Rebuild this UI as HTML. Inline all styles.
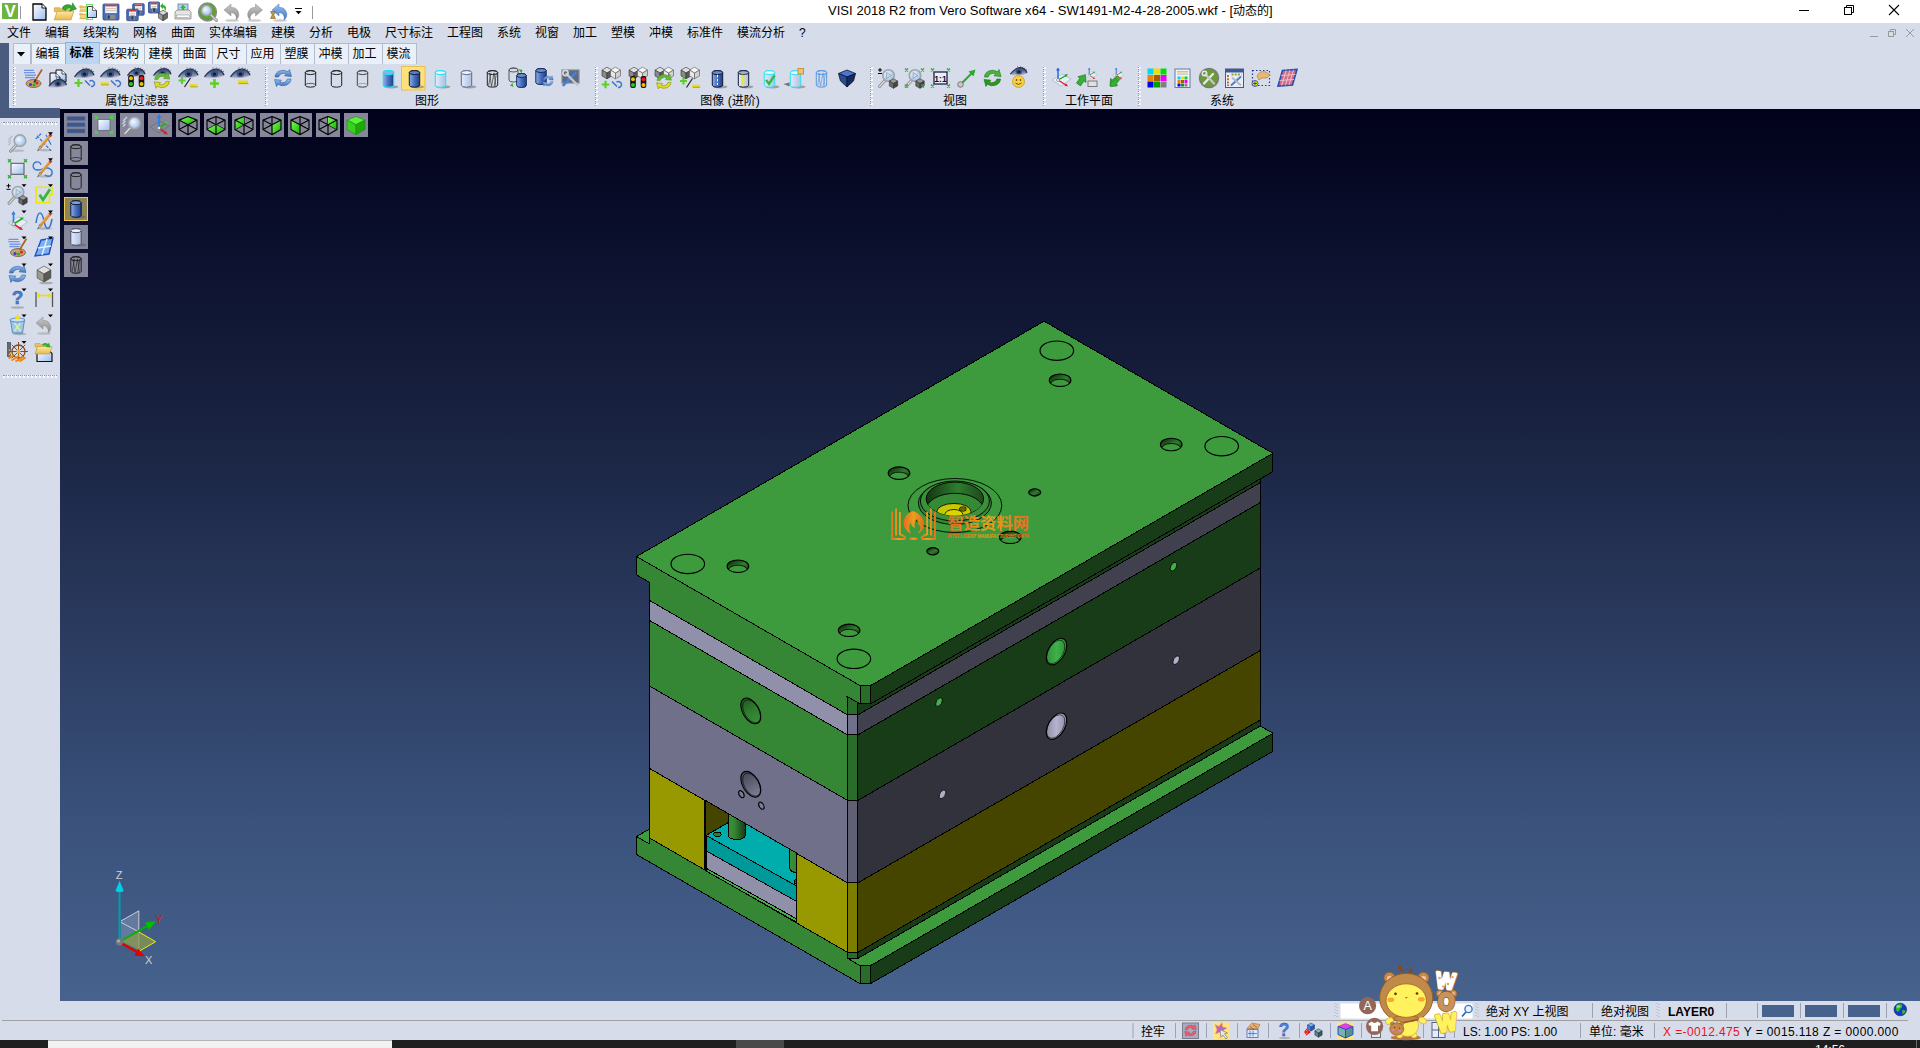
<!DOCTYPE html><html><head><meta charset="utf-8"><title>VISI</title><style>
*{margin:0;padding:0;box-sizing:border-box}
html,body{width:1920px;height:1048px;overflow:hidden;background:#d6dcea;font-family:"Liberation Sans","Noto Sans CJK SC",sans-serif;font-size:12px;color:#000}
.abs{position:absolute}
#title{left:0;top:0;width:1920px;height:23px;background:#fff}
#title .t{left:828px;top:1px;font-size:13px;white-space:nowrap;letter-spacing:0.04px}
#menu{left:0;top:23px;width:1920px;height:20px;background:#d6dcea}
#menu span{position:absolute;top:2px;font-size:12px;white-space:nowrap;line-height:16px}
#strip{left:0;top:43px;width:9px;height:75px;background:#4a5b80}
#strip2{left:0;top:108px;width:60px;height:10px;background:#4a5b80}
#tabs{left:12px;top:43px;height:21px}
.tab{position:absolute;top:43px;height:21px;background:#eaf0fa;border:1px solid #b4bccc;border-bottom:none;font-size:12px;line-height:21px;text-align:center;white-space:nowrap;padding-right:2px}
.tab.sel{background:#bcd6f2;border-color:#8fb0d8;top:42px;height:22px;font-weight:bold}
#tb{left:12px;top:64px;width:1908px;height:45px;background:#d6dcea}
.grp{position:absolute;top:93px;font-size:12px;line-height:16px;white-space:nowrap;transform:translateX(-50%)}
.grip{position:absolute;top:67px;width:3px;height:39px;background-image:repeating-linear-gradient(#f6f8fc 0 2px,transparent 2px 4px);border-left:1px dotted #8e96a8}
#left{left:0;top:118px;width:60px;height:883px;background:#d6dcea}
.hgrip{position:absolute;left:3px;width:54px;height:3px;border-top:1px dotted #8e96a8;background-image:repeating-linear-gradient(90deg,#f6f8fc 0 2px,transparent 2px 4px)}
#vp{left:60px;top:109px;width:1860px;height:892px;background:linear-gradient(#01011a 0%,#0a0f2c 14%,#18213f 34%,#2a3a5e 58%,#3a527c 80%,#46628d 100%)}
#svg{left:0;top:0;width:1920px;height:1048px}
#st1{left:0;top:1001px;width:1920px;height:20px;background:#d6dcea}
#st2{left:0;top:1021px;width:1920px;height:19px;background:#d6dcea}
#task{left:0;top:1040px;width:1920px;height:8px;background:#1f1f1f}
.st{position:absolute;font-size:12px;white-space:nowrap;line-height:16px}
.vsep{position:absolute;width:1px;background:#9aa2b4}
</style></head><body>
<div id="title" class="abs"><div class="abs t">VISI 2018 R2 from Vero Software x64 - SW1491-M2-4-28-2005.wkf - [<span style="font-size:12px;letter-spacing:0">动态的</span>]</div></div>
<div id="menu" class="abs"><span style="left:7px">文件</span><span style="left:45px">编辑</span><span style="left:83px">线架构</span><span style="left:133px">网格</span><span style="left:171px">曲面</span><span style="left:209px">实体编辑</span><span style="left:271px">建模</span><span style="left:309px">分析</span><span style="left:347px">电极</span><span style="left:385px">尺寸标注</span><span style="left:447px">工程图</span><span style="left:497px">系统</span><span style="left:535px">视窗</span><span style="left:573px">加工</span><span style="left:611px">塑模</span><span style="left:649px">冲模</span><span style="left:687px">标准件</span><span style="left:737px">模流分析</span><span style="left:799px">?</span></div>
<div id="tb" class="abs"></div>
<div id="strip" class="abs"></div><div id="strip2" class="abs"></div>
<div class="tab" style="left:13px;width:18px"></div>
<div class="tab" style="left:31px;width:35px">编辑</div>
<div class="tab sel" style="left:65px;width:35px">标准</div>
<div class="tab" style="left:99px;width:46px">线架构</div>
<div class="tab" style="left:144px;width:35px">建模</div>
<div class="tab" style="left:178px;width:35px">曲面</div>
<div class="tab" style="left:212px;width:35px">尺寸</div>
<div class="tab" style="left:246px;width:35px">应用</div>
<div class="tab" style="left:280px;width:35px">塑膜</div>
<div class="tab" style="left:314px;width:35px">冲模</div>
<div class="tab" style="left:348px;width:35px">加工</div>
<div class="tab" style="left:382px;width:35px">模流</div>
<div class="grp" style="left:137px">属性/过滤器</div>
<div class="grp" style="left:427px">图形</div>
<div class="grp" style="left:730px">图像 (进阶)</div>
<div class="grp" style="left:955px">视图</div>
<div class="grp" style="left:1089px">工作平面</div>
<div class="grp" style="left:1222px">系统</div>
<div class="grip" style="left:13px"></div>
<div class="grip" style="left:265px"></div>
<div class="grip" style="left:595px"></div>
<div class="grip" style="left:870px"></div>
<div class="grip" style="left:1043px"></div>
<div class="grip" style="left:1138px"></div>
<div id="left" class="abs"><div class="hgrip" style="top:4px"></div><div class="hgrip" style="top:257px"></div></div>
<div id="vp" class="abs"></div>
<div id="st1" class="abs"></div><div id="st2" class="abs"></div>
<div id="task" class="abs"><div class="abs" style="left:0;top:0;width:48px;height:8px;background:#1f1f1f"></div><div class="abs" style="left:48px;top:0;width:344px;height:8px;background:#f2f2f2;border-top:1px solid #b4b4b4"></div><div class="abs" style="left:736px;top:0;width:48px;height:8px;background:#4a4a4a"></div><div class="abs" style="left:1916px;top:0;width:1px;height:8px;background:#6a6a6a"></div><div class="abs" style="left:1815px;top:4px;font-size:12px;color:#fff;line-height:12px">14:56</div></div>
<div class="st" style="left:1486px;top:1004px">绝对 XY 上视图</div>
<div class="st" style="left:1601px;top:1004px">绝对视图</div>
<div class="st" style="left:1668px;top:1004px;font-weight:bold">LAYER0</div>
<div class="st" style="left:1141px;top:1024px">拴牢</div>
<div class="st" style="left:1463px;top:1024px">LS: 1.00 PS: 1.00</div>
<div class="st" style="left:1589px;top:1024px">单位: 毫米</div>
<div class="st" style="left:1663px;top:1024px;letter-spacing:0.4px"><span style="color:#e8141c">X =-0012.475</span> Y = 0015.118 Z = 0000.000</div>

<svg id="svg" class="abs" width="1920" height="1048" viewBox="0 0 1920 1048"><g stroke="#000" stroke-width="1" stroke-linejoin="round" shape-rendering="crispEdges">
<polygon points="636.5,836.5 860.1,965.6 870.6,965.6 1272.9,733.3 1044.1,601.2" fill="#3d9b3d" />
<polygon points="636.5,836.5 649.1,843.8 649.1,837.8 847.6,952.4 847.6,958.4 860.1,965.6 860.1,983.6 636.5,854.5" fill="#358735" />
<polygon points="860.1,965.6 870.6,965.6 870.6,983.6 860.1,983.6" fill="#2a6c2a" />
<polygon points="870.6,965.6 1272.9,733.3 1272.9,751.3 870.6,983.6" fill="#183c18" />
<polygon points="847.6,952.4 857.9,952.4 857.9,958.4 847.6,958.4" fill="#2a6c2a" />
<polygon points="857.9,952.4 1260.3,720.0 1260.3,726.0 857.9,958.4" fill="#183c18" />
<polygon points="649.1,582.0 847.6,696.7 847.6,714.9 649.1,600.2" fill="#358735" />
<polygon points="847.6,696.7 857.9,696.7 857.9,714.9 847.6,714.9" fill="#2a6c2a" />
<polygon points="857.9,696.7 1260.3,464.3 1260.3,482.5 857.9,714.9" fill="#183c18" />
<polygon points="649.1,600.2 847.6,714.9 847.6,734.9 649.1,620.2" fill="#9090ab" />
<polygon points="847.6,714.9 857.9,714.9 857.9,734.9 847.6,734.9" fill="#70708a" />
<polygon points="857.9,714.9 1260.3,482.5 1260.3,502.5 857.9,734.9" fill="#41404e" />
<polygon points="649.1,620.2 847.6,734.9 847.6,800.4 649.1,685.8" fill="#358735" />
<polygon points="847.6,734.9 857.9,734.9 857.9,800.4 847.6,800.4" fill="#2a6c2a" />
<polygon points="857.9,734.9 1260.3,502.5 1260.3,568.0 857.9,800.4" fill="#183c18" />
<polygon points="649.1,685.8 847.6,800.4 847.6,882.9 649.1,768.2" fill="#70708a" />
<polygon points="847.6,800.4 857.9,800.4 857.9,882.9 847.6,882.9" fill="#606074" />
<polygon points="857.9,800.4 1260.3,568.0 1260.3,650.5 857.9,882.9" fill="#32323c" />
<polygon points="649.1,768.2 847.6,882.9 847.6,952.4 649.1,837.8" fill="#989800" />
<polygon points="847.6,882.9 857.9,882.9 857.9,952.4 847.6,952.4" fill="#7d7d00" />
<polygon points="857.9,882.9 1260.3,650.5 1260.3,720.0 857.9,952.4" fill="#454500" />
<g stroke="none">
<polygon points="704.7,800.0 728.1,813.6 728.1,822.7 706.0,835.4 704.7,835.4" fill="#454500" />
<polygon points="706.0,835.4 728.1,822.7 728.1,813.6 796.9,853.3 796.9,886.2" fill="#00adad" />
</g>
<polygon points="706.0,835.4 796.9,886.2 796.9,901.6 706.0,850.8" fill="#009999" />
<polygon points="706.0,850.8 796.9,901.6 796.9,919.0 706.0,868.2" fill="#9090ab" />
<polygon points="706.0,868.2 796.9,919.0 796.9,922.4 706.0,871.0" fill="#45b045" />
<path d="M706,835.4 L728.1,822.7 M706,835.4 L796.9,886.2" fill="none"/>
<defs><linearGradient id="pin" x1="0" x2="1" y1="0" y2="0"><stop offset="0" stop-color="#3a903a"/><stop offset="0.35" stop-color="#358735"/><stop offset="1" stop-color="#163816"/></linearGradient><linearGradient id="holeG" x1="0" x2="1" y1="0" y2="0"><stop offset="0" stop-color="#143414"/><stop offset="0.55" stop-color="#2f7d2f"/><stop offset="1" stop-color="#1c4a1c"/></linearGradient><linearGradient id="holeGL" x1="0" x2="1" y1="0" y2="1"><stop offset="0" stop-color="#1c4a1c"/><stop offset="0.5" stop-color="#2f7d2f"/><stop offset="1" stop-color="#3c993c"/></linearGradient><linearGradient id="holeGr" x1="0" x2="1" y1="0" y2="1"><stop offset="0" stop-color="#3a3a48"/><stop offset="1" stop-color="#8a8aa4"/></linearGradient><linearGradient id="holeRG" x1="0" x2="1" y1="0" y2="0"><stop offset="0" stop-color="#2f8f37"/><stop offset="0.5" stop-color="#3fb04a"/><stop offset="1" stop-color="#2f8f37"/></linearGradient><linearGradient id="holeRL" x1="0" x2="1" y1="0" y2="0"><stop offset="0" stop-color="#8d8da8"/><stop offset="0.5" stop-color="#b4b4cc"/><stop offset="1" stop-color="#8d8da8"/></linearGradient><linearGradient id="wm" x1="0" x2="1" y1="0" y2="0"><stop offset="0" stop-color="#f06a1e"/><stop offset="0.5" stop-color="#f7a01c"/><stop offset="1" stop-color="#f06a1e"/></linearGradient><clipPath id="opclip"><polygon points="704.7,800.0 796.9,853.3 796.9,922.5 704.7,869.6"/></clipPath></defs>
<g clip-path="url(#opclip)">
<path d="M728.1,812 L728.1,834.8 A8.7,4.9 0 0 0 745.5,834.8 L745.5,822 Z" fill="url(#pin)"/>
<path d="M789.6,846 L789.6,868 A8.7,4.9 0 0 0 807,868 L807,846 Z" fill="url(#pin)"/>
<ellipse cx="796.6" cy="881.6" rx="2.6" ry="2" fill="#246024"/>
</g>
<ellipse cx="717.4" cy="834.3" rx="3.7" ry="2.1" fill="#2f7f2f"/>
<path d="M704.7,800 L796.9,853.3 M796.9,853.3 L796.9,922.4" fill="none"/>
<path d="M705.2,800 L705.2,869.9" fill="none" stroke-width="2"/>
<polygon points="636.5,556.5 860.1,685.6 860.1,703.9 649.1,582.0 636.5,574.8" fill="#358735" />
<polygon points="860.1,685.6 870.6,685.6 870.6,703.9 860.1,703.9" fill="#2a6c2a" />
<polygon points="870.6,685.6 1272.9,453.3 1272.9,471.6 870.6,703.9" fill="#183c18" />
<polygon points="636.5,556.5 860.1,685.6 870.6,685.6 1272.9,453.3 1044.1,321.2" fill="#3d9b3d" />
<path d="M650.3,582.8 L846.6,696.1" stroke="#358735" stroke-width="1.6" fill="none"/>
<circle r="13.7" fill="none" transform="matrix(0.8660,0.5000,0.8660,-0.5000,687.8,563.9)" vector-effect="non-scaling-stroke" stroke-width="1.15" shape-rendering="geometricPrecision"/>
<circle r="13.7" fill="none" transform="matrix(0.8660,0.5000,0.8660,-0.5000,1221.7,446.2)" vector-effect="non-scaling-stroke" stroke-width="1.15" shape-rendering="geometricPrecision"/>
<circle r="13.7" fill="none" transform="matrix(0.8660,0.5000,0.8660,-0.5000,1056.8,350.7)" vector-effect="non-scaling-stroke" stroke-width="1.15" shape-rendering="geometricPrecision"/>
<circle r="13.7" fill="none" transform="matrix(0.8660,0.5000,0.8660,-0.5000,853.9,658.8)" vector-effect="non-scaling-stroke" stroke-width="1.15" shape-rendering="geometricPrecision"/>
<circle r="8.8" fill="url(#holeG)" transform="matrix(0.8660,0.5000,0.8660,-0.5000,737.9,566.2)" vector-effect="non-scaling-stroke" stroke-width="1.15" shape-rendering="geometricPrecision"/><path d="M728.6,569.3 A9.7,5.6 0 0 1 747.2,569.3 A10.8,6.2 0 0 1 728.6,569.3 Z" fill="#3d9b3d" stroke-width="0.8"/>
<circle r="8.8" fill="url(#holeG)" transform="matrix(0.8660,0.5000,0.8660,-0.5000,1171.2,444.5)" vector-effect="non-scaling-stroke" stroke-width="1.15" shape-rendering="geometricPrecision"/><path d="M1161.9,447.6 A9.7,5.6 0 0 1 1180.5,447.6 A10.8,6.2 0 0 1 1161.9,447.6 Z" fill="#3d9b3d" stroke-width="0.8"/>
<circle r="8.8" fill="url(#holeG)" transform="matrix(0.8660,0.5000,0.8660,-0.5000,1060.1,380.2)" vector-effect="non-scaling-stroke" stroke-width="1.15" shape-rendering="geometricPrecision"/><path d="M1050.8,383.3 A9.7,5.6 0 0 1 1069.4,383.3 A10.8,6.2 0 0 1 1050.8,383.3 Z" fill="#3d9b3d" stroke-width="0.8"/>
<circle r="8.8" fill="url(#holeG)" transform="matrix(0.8660,0.5000,0.8660,-0.5000,849.1,630.3)" vector-effect="non-scaling-stroke" stroke-width="1.15" shape-rendering="geometricPrecision"/><path d="M839.8,633.4 A9.7,5.6 0 0 1 858.4,633.4 A10.8,6.2 0 0 1 839.8,633.4 Z" fill="#3d9b3d" stroke-width="0.8"/>
<circle r="8.8" fill="url(#holeG)" transform="matrix(0.8660,0.5000,0.8660,-0.5000,899.0,473.1)" vector-effect="non-scaling-stroke" stroke-width="1.15" shape-rendering="geometricPrecision"/><path d="M889.7,476.2 A9.7,5.6 0 0 1 908.3,476.2 A10.8,6.2 0 0 1 889.7,476.2 Z" fill="#3d9b3d" stroke-width="0.8"/>
<circle r="8.8" fill="url(#holeG)" transform="matrix(0.8660,0.5000,0.8660,-0.5000,1010.3,537.3)" vector-effect="non-scaling-stroke" stroke-width="1.15" shape-rendering="geometricPrecision"/><path d="M1001.0,540.4 A9.7,5.6 0 0 1 1019.6,540.4 A10.8,6.2 0 0 1 1001.0,540.4 Z" fill="#3d9b3d" stroke-width="0.8"/>
<circle r="4.9" fill="url(#holeG)" transform="matrix(0.8660,0.5000,0.8660,-0.5000,1034.7,492.4)" vector-effect="non-scaling-stroke" stroke-width="1.15" shape-rendering="geometricPrecision"/>
<circle r="4.9" fill="url(#holeG)" transform="matrix(0.8660,0.5000,0.8660,-0.5000,932.8,551.3)" vector-effect="non-scaling-stroke" stroke-width="1.15" shape-rendering="geometricPrecision"/>
<ellipse cx="954.9" cy="505.5" rx="46.9" ry="27" fill="none" stroke-width="0.9"/>
<ellipse cx="954.9" cy="503.0" rx="36.5" ry="21.5" fill="#358735" stroke-width="0.9"/>
<ellipse cx="954.9" cy="501.0" rx="34.5" ry="20" fill="#3a913a" stroke-width="0.9"/>
<ellipse cx="954.9" cy="498.8" rx="28.7" ry="16.7" fill="url(#holeG)" stroke-width="0.9"/>
<clipPath id="spr"><ellipse cx="954.9" cy="498.8" rx="28.7" ry="16.7"/></clipPath>
<g clip-path="url(#spr)"><ellipse cx="954.9" cy="510.0" rx="28.7" ry="16.7" fill="#358a35" stroke-width="0.9"/>
<ellipse cx="953.9" cy="511.5" rx="17" ry="8" fill="#c8c800" stroke-width="0.8"/>
<ellipse cx="953.9" cy="514.5" rx="9" ry="5" fill="#d8d800" stroke-width="0.8"/>
<ellipse cx="962.9" cy="509.0" rx="3.5" ry="2.4" fill="#6b6b00" stroke-width="0.6"/>
</g>
<circle r="11.5" fill="url(#holeGL)" transform="matrix(0.8660,0.5000,0,1,750.8,710.9)" vector-effect="non-scaling-stroke" stroke-width="1.15" shape-rendering="geometricPrecision"/>
<circle r="10.3" fill="none" transform="matrix(0.8660,0.5000,0,1,751.6,711.3)" vector-effect="non-scaling-stroke" stroke-width="0.6" shape-rendering="geometricPrecision"/>
<circle r="11.5" fill="url(#holeGr)" transform="matrix(0.8660,0.5000,0,1,750.8,784.2)" vector-effect="non-scaling-stroke" stroke-width="1.15" shape-rendering="geometricPrecision"/>
<circle r="10.3" fill="none" transform="matrix(0.8660,0.5000,0,1,751.6,784.6)" vector-effect="non-scaling-stroke" stroke-width="0.6" shape-rendering="geometricPrecision"/>
<circle r="3.2" fill="#7c7c96" transform="matrix(0.8660,0.5000,0,1,741.4,794.2)" vector-effect="non-scaling-stroke" stroke-width="1.15" shape-rendering="geometricPrecision"/>
<circle r="3.2" fill="#7c7c96" transform="matrix(0.8660,0.5000,0,1,761.4,805.7)" vector-effect="non-scaling-stroke" stroke-width="1.15" shape-rendering="geometricPrecision"/>
<circle r="11.8" fill="url(#holeRG)" transform="matrix(0.8660,-0.5000,0,1,1056.5,651.6)" vector-effect="non-scaling-stroke" stroke-width="1.15" shape-rendering="geometricPrecision"/>
<circle r="10.5" fill="none" transform="matrix(0.8660,-0.5000,0,1,1055.7,651.9)" vector-effect="non-scaling-stroke" stroke-width="0.6" shape-rendering="geometricPrecision"/>
<circle r="11.8" fill="url(#holeRL)" transform="matrix(0.8660,-0.5000,0,1,1056.5,726.2)" vector-effect="non-scaling-stroke" stroke-width="1.15" shape-rendering="geometricPrecision"/>
<circle r="10.5" fill="none" transform="matrix(0.8660,-0.5000,0,1,1055.7,726.5)" vector-effect="non-scaling-stroke" stroke-width="0.6" shape-rendering="geometricPrecision"/>
<circle r="3.8" fill="#44b04c" transform="matrix(0.8660,-0.5000,0,1,1173.5,566.7)" vector-effect="non-scaling-stroke" stroke-width="0.8" shape-rendering="geometricPrecision"/>
<circle r="3.8" fill="#44b04c" transform="matrix(0.8660,-0.5000,0,1,939.0,702.1)" vector-effect="non-scaling-stroke" stroke-width="0.8" shape-rendering="geometricPrecision"/>
<circle r="3.8" fill="#aeaec8" transform="matrix(0.8660,-0.5000,0,1,1176.2,660.2)" vector-effect="non-scaling-stroke" stroke-width="0.8" shape-rendering="geometricPrecision"/>
<circle r="3.8" fill="#aeaec8" transform="matrix(0.8660,-0.5000,0,1,942.5,794.3)" vector-effect="non-scaling-stroke" stroke-width="0.8" shape-rendering="geometricPrecision"/>
</g>
<defs>
<linearGradient id="gDoc" x1="0" y1="0" x2="1" y2="1"><stop offset="0" stop-color="#fff"/><stop offset="1" stop-color="#9dbdf0"/></linearGradient>
<linearGradient id="gCylB" x1="0" x2="1"><stop offset="0" stop-color="#8fb0e8"/><stop offset="0.45" stop-color="#4a74c4"/><stop offset="1" stop-color="#1f3f86"/></linearGradient>
<linearGradient id="gCylL" x1="0" x2="1"><stop offset="0" stop-color="#e4ecfa"/><stop offset="1" stop-color="#aebfe0"/></linearGradient>
<linearGradient id="gFold" x1="0" y1="0" x2="0" y2="1"><stop offset="0" stop-color="#fbe9a6"/><stop offset="1" stop-color="#e9b94a"/></linearGradient>
<linearGradient id="gEye" x1="0" y1="0" x2="0" y2="1"><stop offset="0" stop-color="#2f4468"/><stop offset="1" stop-color="#9fb2d6"/></linearGradient>
<linearGradient id="gRef" x1="0" y1="0" x2="0" y2="1"><stop offset="0" stop-color="#9cc0ee"/><stop offset="1" stop-color="#3f74c0"/></linearGradient>
<linearGradient id="gCube" x1="0" y1="0" x2="1" y2="1"><stop offset="0" stop-color="#d8d8d8"/><stop offset="1" stop-color="#6a6a6a"/></linearGradient>
<radialGradient id="gLens" cx="0.4" cy="0.4" r="0.7"><stop offset="0" stop-color="#f4f9ff"/><stop offset="1" stop-color="#8fb6e2"/></radialGradient>
<linearGradient id="gUndo" x1="0" y1="0" x2="0" y2="1"><stop offset="0" stop-color="#c8c8c8"/><stop offset="1" stop-color="#8a8a8a"/></linearGradient>
<linearGradient id="gGreenCube" x1="0" y1="0" x2="1" y2="1"><stop offset="0" stop-color="#7dff5a"/><stop offset="1" stop-color="#16b000"/></linearGradient>
</defs>
<rect x="2" y="3" width="16" height="16" fill="#6db33f"/><text x="10.300" y="17" font-size="16.500" font-weight="bold" text-anchor="middle" font-family="Liberation Sans,sans-serif" fill="#fff">V</text><circle cx="6" cy="5.800" r="1.200" fill="#fff"/>
<path d="M20.5,6 v13" stroke="#9a9a9a" stroke-width="1"/>
<g transform="translate(39.5,12.0)"><path d="M-6.5,-8.0 h9.0 l4,4 v12.0 h-13.0 Z" fill="url(#gDoc)" stroke="#000" stroke-width="1.3"/><path d="M2.5,-8.0 v4 h4" fill="#fff" stroke="#000" stroke-width="0.9099999999999999"/></g>
<g transform="translate(63.5,13.5)"><g transform="translate(0.0,0.0) scale(1.15)"><path d="M-8,-5 h5 l1.5,1.5 h7 v2 h-13.5 Z" fill="#e8c060" stroke="#c09830" stroke-width="0.5"/><path d="M-8,5.5 L-5.5,-2 H9 L6.5,5.5 Z" fill="url(#gFold)" stroke="#c09830" stroke-width="0.6"/></g><g transform="translate(3.0,-4.0) scale(1.10)"><path d="M-4,-1 A5.5,5 0 0 1 5,-3 L5.5,-6 L9,-0.5 L3,1.5 L3.8,-1 A3.5,3 0 0 0 -1,1 Z" fill="#2faa2f" stroke="#1c7a1c" stroke-width="0.5"/></g></g>
<g transform="translate(84.0,8.5) scale(0.55)"><path d="M-8,-5 h5 l1.5,1.5 h7 v2 h-13.5 Z" fill="#e8c060" stroke="#c09830" stroke-width="0.5"/><path d="M-8,5.5 L-5.5,-2 H9 L6.5,5.5 Z" fill="url(#gFold)" stroke="#c09830" stroke-width="0.6"/></g><g transform="translate(84.0,16.0) scale(0.55)"><path d="M-8,-5 h5 l1.5,1.5 h7 v2 h-13.5 Z" fill="#e8c060" stroke="#c09830" stroke-width="0.5"/><path d="M-8,5.5 L-5.5,-2 H9 L6.5,5.5 Z" fill="url(#gFold)" stroke="#c09830" stroke-width="0.6"/></g><rect x="86.5" y="4.5" width="6" height="15" fill="none" stroke="#6fdc6f" stroke-width="1"/><g transform="translate(92.0,12.0)"><path d="M-4.5,-5.5 h5.0 l4,4 v7.0 h-9.0 Z" fill="url(#gDoc)" stroke="#222" stroke-width="0.9"/><path d="M0.5,-5.5 v4 h4" fill="#fff" stroke="#222" stroke-width="0.63"/></g>
<g transform="translate(111.0,12.0)"><rect x="-8.0" y="-8.0" width="16.0" height="16.0" rx="1" fill="#4a6db4" stroke="#2c4a8c" stroke-width="0.8"/><rect x="-5.8" y="-7.2" width="11.6" height="8.3" fill="#f4f4f4"/><rect x="-5.8" y="-7.2" width="11.6" height="1.6" fill="#e03828"/><path d="M-5.0,-3.4 h10.0 M-5.0,-1.4 h10.0" stroke="#b0b0b0" stroke-width="0.7"/><rect x="-4.4" y="2.8" width="8.8" height="4.6" fill="#8a8a8a"/><rect x="-3.4" y="3.4" width="2.2" height="3.4" fill="#2c3c60"/></g>
<g transform="translate(138.5,9.5)"><rect x="-5.8" y="-5.8" width="11.5" height="11.5" rx="1" fill="#4a6db4" stroke="#2c4a8c" stroke-width="0.8"/><rect x="-3.5" y="-5.0" width="7.1" height="6.0" fill="#f4f4f4"/><rect x="-3.5" y="-5.0" width="7.1" height="1.6" fill="#e03828"/><path d="M-2.8,-1.2 h5.5 M-2.8,0.8 h5.5" stroke="#b0b0b0" stroke-width="0.7"/><rect x="-2.1" y="0.5" width="4.3" height="4.6" fill="#8a8a8a"/><rect x="-1.2" y="1.2" width="2.2" height="3.4" fill="#2c3c60"/></g><g transform="translate(132.5,15.0)"><rect x="-5.8" y="-5.8" width="11.5" height="11.5" rx="1" fill="#4a6db4" stroke="#2c4a8c" stroke-width="0.8"/><rect x="-3.5" y="-5.0" width="7.1" height="6.0" fill="#f4f4f4"/><rect x="-3.5" y="-5.0" width="7.1" height="1.6" fill="#e03828"/><path d="M-2.8,-1.2 h5.5 M-2.8,0.8 h5.5" stroke="#b0b0b0" stroke-width="0.7"/><rect x="-2.1" y="0.5" width="4.3" height="4.6" fill="#8a8a8a"/><rect x="-1.2" y="1.2" width="2.2" height="3.4" fill="#2c3c60"/></g>
<g transform="translate(154.0,7.5)"><rect x="-5.5" y="-5.5" width="11.0" height="11.0" rx="1" fill="#4a6db4" stroke="#2c4a8c" stroke-width="0.8"/><rect x="-3.3" y="-4.7" width="6.6" height="5.7" fill="#f4f4f4"/><rect x="-3.3" y="-4.7" width="6.6" height="1.6" fill="#e03828"/><path d="M-2.5,-0.9 h5.0 M-2.5,1.1 h5.0" stroke="#b0b0b0" stroke-width="0.7"/><rect x="-1.9" y="0.3" width="3.8" height="4.6" fill="#8a8a8a"/><rect x="-0.9" y="0.9" width="2.2" height="3.4" fill="#2c3c60"/></g><g transform="translate(163.0,15.5)"><polygon points="0,-5.2 4.5,-2.6 0,0 -4.5,-2.6" fill="#d8d8d8" stroke="#333" stroke-width="0.6"/><polygon points="-4.5,-2.6 0,0 0,5.2 -4.5,2.6" fill="#9a9a9a" stroke="#333" stroke-width="0.6"/><polygon points="4.5,-2.6 0,0 0,5.2 4.5,2.6" fill="#6a6a6a" stroke="#333" stroke-width="0.6"/></g><g transform="translate(163.0,6.0)"><path d="M-3,0 l3,-3 v2 a3.2,3.2 0 0 1 1.5,6 a2.6,2.6 0 0 0 -1.5,-3.4 v1.6 Z" fill="#2fb42f"/></g>
<g transform="translate(183.0,12.0)"><rect x="-5" y="-8" width="10" height="9" fill="#b8d0f4" stroke="#5a6a8a" stroke-width="0.7"/><path d="M0,-7.5 l3,3.4 h-1.8 v2.4 h-2.4 v-2.4 h-1.800 Z" fill="#2fc02f"/><path d="M-8,0 L-6,-2 H6 L8,0 V7 H-8 Z" fill="#e4e4e4" stroke="#777" stroke-width="0.7"/><rect x="-6.5" y="3" width="13" height="2.5" fill="#fff" stroke="#888" stroke-width="0.5"/></g>
<g transform="translate(207.5,12.0)"><circle r="9" fill="#5da033" stroke="#8a8a8a" stroke-width="1.4"/><g transform="translate(0.0,-0.5)"><path d="M3.5,3.5 L9,9" stroke="#8a8a8a" stroke-width="3" stroke-linecap="round"/><path d="M3.5,3.5 L9,9" stroke="#d8d8d8" stroke-width="1.2" stroke-linecap="round"/><circle cx="-1" cy="-1" r="5.2" fill="url(#gLens)" stroke="#9aa0a8" stroke-width="1.6"/></g></g>
<g transform="translate(232.0,12.0)"><ellipse cx="0" cy="8.5" rx="7" ry="1.3" fill="#999" opacity="0.5"/><path d="M-8,-2 L-1,-8 L-1,-4.5 A7,7 0 0 1 4,8 A5.5,5.5 0 0 0 -1,0.5 L-1,4 Z" fill="url(#gUndo)" stroke="#8a8a8a" stroke-width="0.5"/></g>
<g transform="translate(254.5,12.0)"><g transform="scale(-1,1)"><ellipse cx="0" cy="8.5" rx="7" ry="1.3" fill="#999" opacity="0.5"/><path d="M-8,-2 L-1,-8 L-1,-4.5 A7,7 0 0 1 4,8 A5.5,5.5 0 0 0 -1,0.5 L-1,4 Z" fill="url(#gUndo)" stroke="#8a8a8a" stroke-width="0.5"/></g></g>
<g transform="translate(280.0,12.0)"><ellipse cx="0" cy="8.5" rx="7" ry="1.3" fill="#999" opacity="0.5"/><path d="M-8,-2 L-1,-8 L-1,-4.5 A7,7 0 0 1 4,8 A5.5,5.5 0 0 0 -1,0.5 L-1,4 Z" fill="url(#gRef)" stroke="#3f74c0" stroke-width="0.5"/></g><path d="M270.5,11.5 h5 l-1.800,3.400 l1.800,3.600 h-5 l1.800,-3.600 Z" fill="#b89a50" stroke="#7a6020" stroke-width="0.6"/>
<path d="M295,8.500 h7" stroke="#000" stroke-width="1"/><path d="M295.500,11 h6 l-3,3.200 Z" fill="#000"/><path d="M312.500,6 v13" stroke="#9a9a9a" stroke-width="1"/>
<path d="M1799,10.500 h10" stroke="#000" stroke-width="1"/><rect x="1844.500" y="7.500" width="7" height="7" fill="#fff" stroke="#000" stroke-width="1"/><path d="M1846.500,7.500 v-2 h7 v7 h-2" fill="none" stroke="#000" stroke-width="1"/><path d="M1889,5 l10,10 M1899,5 l-10,10" stroke="#000" stroke-width="1.1"/>
<path d="M1870,36.500 h8" stroke="#9a9a9a" stroke-width="1"/><rect x="1888.500" y="31.500" width="5" height="5" fill="none" stroke="#9a9a9a" stroke-width="1"/><path d="M1890.500,31.500 v-2 h5 v5 h-2" fill="none" stroke="#9a9a9a" stroke-width="1"/><path d="M1906,29 l8,8 M1914,29 l-8,8" stroke="#9a9a9a" stroke-width="1"/>
<path d="M17,52 h8 l-4,4.500 Z" fill="#000"/>
<g transform="translate(33.0,78.0)"><path d="M-9,-7.500 h10 M-9,-5.200 h11 M-8,-2.900 h11 M-8,-0.600 h10" stroke="#6f8fe0" stroke-width="1.600"/><path d="M-8.500,-6.400 h10 M-8.500,-4 h11 M-8,-1.700 h11" stroke="#e8eefc" stroke-width="0.7"/><ellipse cx="0.500" cy="5.500" rx="7.500" ry="4" fill="#c8a070" stroke="#6a4a2a" stroke-width="0.7"/><circle cx="-2.500" cy="6.500" r="1.500" fill="#2040e0"/><circle cx="1" cy="7" r="1.500" fill="#20b020"/><circle cx="4" cy="5" r="1.500" fill="#e02020"/><path d="M9,-8.500 L2,3" stroke="#b06020" stroke-width="1.700"/><path d="M2.800,1.600 L1.200,4.500" stroke="#333" stroke-width="1.700"/></g>
<g transform="translate(58.0,78.0)"><g transform="translate(3.0,-2.0)"><path d="M-5.0,-6.0 h6.0 l4,4 v8.0 h-10.0 Z" fill="url(#gDoc)" stroke="#111" stroke-width="1"/><path d="M1.0,-6.0 v4 h4" fill="#fff" stroke="#111" stroke-width="0.7"/></g><g transform="translate(-3.0,1.0)"><path d="M-5.0,-6.0 h6.0 l4,4 v8.0 h-10.0 Z" fill="url(#gDoc)" stroke="#111" stroke-width="1"/><path d="M1.0,-6.0 v4 h4" fill="#fff" stroke="#111" stroke-width="0.7"/></g><g transform="translate(-0.5,6.5) scale(0.90)"><path d="M-9.5,2 Q-3,-6.5 4,-5 Q8.5,-3.5 10,0.5 Q4,3.5 -2,3 Q-6,2.6 -9.5,2 Z" fill="url(#gEye)"/><path d="M-9.5,2 Q-3,-7 4,-5.4 Q8.5,-4 10,0.5" fill="none" stroke="#27344f" stroke-width="1.4"/><ellipse cx="0.5" cy="-0.8" rx="3.6" ry="3.2" fill="#39527e"/><circle cx="0.5" cy="-0.8" r="1.6" fill="#101828"/><path d="M-9.5,2.4 Q-2,4 10,0.8" fill="none" stroke="#c8a0b0" stroke-width="0.7"/><path d="M2,-6 l0.5,-1.2 M4.5,-5.4 l0.8,-1.2 M6.8,-4.4 l1.1,-1 M8.6,-2.8 l1.2,-0.7 M-1,-6.2 l0,-1.1" stroke="#27344f" stroke-width="0.7"/></g></g>
<g transform="translate(84.0,78.0)"><g transform="translate(0.0,-3.2) scale(1.00)"><path d="M-9.5,2 Q-3,-6.5 4,-5 Q8.5,-3.5 10,0.5 Q4,3.5 -2,3 Q-6,2.6 -9.5,2 Z" fill="url(#gEye)"/><path d="M-9.5,2 Q-3,-7 4,-5.4 Q8.5,-4 10,0.5" fill="none" stroke="#27344f" stroke-width="1.4"/><ellipse cx="0.5" cy="-0.8" rx="3.6" ry="3.2" fill="#39527e"/><circle cx="0.5" cy="-0.8" r="1.6" fill="#101828"/><path d="M-9.5,2.4 Q-2,4 10,0.8" fill="none" stroke="#c8a0b0" stroke-width="0.7"/><path d="M2,-6 l0.5,-1.2 M4.5,-5.4 l0.8,-1.2 M6.8,-4.4 l1.1,-1 M8.6,-2.8 l1.2,-0.7 M-1,-6.2 l0,-1.1" stroke="#27344f" stroke-width="0.7"/></g><path d="M-9.5,5.0 h8.0 M-5.5,1.0 v8.0" stroke="#5ed024" stroke-width="2.2"/><path d="M1.0,2.5 l5,5 M5.5,3.3 a3,3 0 1 1 1.5,5.2" fill="none" stroke="#3f74c8" stroke-width="1.5"/></g>
<g transform="translate(110.0,78.0)"><g transform="translate(0.0,-3.2) scale(1.00)"><path d="M-9.5,2 Q-3,-6.5 4,-5 Q8.5,-3.5 10,0.5 Q4,3.5 -2,3 Q-6,2.6 -9.5,2 Z" fill="url(#gEye)"/><path d="M-9.5,2 Q-3,-7 4,-5.4 Q8.5,-4 10,0.5" fill="none" stroke="#27344f" stroke-width="1.4"/><ellipse cx="0.5" cy="-0.8" rx="3.6" ry="3.2" fill="#39527e"/><circle cx="0.5" cy="-0.8" r="1.6" fill="#101828"/><path d="M-9.5,2.4 Q-2,4 10,0.8" fill="none" stroke="#c8a0b0" stroke-width="0.7"/><path d="M2,-6 l0.5,-1.2 M4.5,-5.4 l0.8,-1.2 M6.8,-4.4 l1.1,-1 M8.6,-2.8 l1.2,-0.7 M-1,-6.2 l0,-1.1" stroke="#27344f" stroke-width="0.7"/></g><path d="M-9.5,5.5 h8.0" stroke="#e8dc00" stroke-width="2.4"/><path d="M-9.0,6.9 h8.0" stroke="#8a8200" stroke-width="0.6"/><path d="M1.0,2.5 l5,5 M5.5,3.3 a3,3 0 1 1 1.5,5.2" fill="none" stroke="#3f74c8" stroke-width="1.5"/></g>
<g transform="translate(136.0,78.0)"><g transform="translate(0.0,-4.2) scale(0.90)"><path d="M-9.5,2 Q-3,-6.5 4,-5 Q8.5,-3.5 10,0.5 Q4,3.5 -2,3 Q-6,2.6 -9.5,2 Z" fill="url(#gEye)"/><path d="M-9.5,2 Q-3,-7 4,-5.4 Q8.5,-4 10,0.5" fill="none" stroke="#27344f" stroke-width="1.4"/><ellipse cx="0.5" cy="-0.8" rx="3.6" ry="3.2" fill="#39527e"/><circle cx="0.5" cy="-0.8" r="1.6" fill="#101828"/><path d="M-9.5,2.4 Q-2,4 10,0.8" fill="none" stroke="#c8a0b0" stroke-width="0.7"/><path d="M2,-6 l0.5,-1.2 M4.5,-5.4 l0.8,-1.2 M6.8,-4.4 l1.1,-1 M8.6,-2.8 l1.2,-0.7 M-1,-6.2 l0,-1.1" stroke="#27344f" stroke-width="0.7"/></g><rect x="-7.8" y="-3.0" width="5.6" height="12" rx="2" fill="#111"/><circle cx="-5.0" cy="0.2" r="2" fill="#f0c000"/><circle cx="-5.0" cy="6.0" r="2" fill="#20d020"/><rect x="2.7" y="-3.0" width="5.6" height="12" rx="2" fill="#111"/><circle cx="5.5" cy="0.2" r="2" fill="#f01818"/><circle cx="5.5" cy="6.0" r="2" fill="#f0c000"/></g>
<g transform="translate(162.0,78.0)"><g transform="translate(0.0,-4.2) scale(0.90)"><path d="M-9.5,2 Q-3,-6.5 4,-5 Q8.5,-3.5 10,0.5 Q4,3.5 -2,3 Q-6,2.6 -9.5,2 Z" fill="url(#gEye)"/><path d="M-9.5,2 Q-3,-7 4,-5.4 Q8.5,-4 10,0.5" fill="none" stroke="#27344f" stroke-width="1.4"/><ellipse cx="0.5" cy="-0.8" rx="3.6" ry="3.2" fill="#39527e"/><circle cx="0.5" cy="-0.8" r="1.6" fill="#101828"/><path d="M-9.5,2.4 Q-2,4 10,0.8" fill="none" stroke="#c8a0b0" stroke-width="0.7"/><path d="M2,-6 l0.5,-1.2 M4.5,-5.4 l0.8,-1.2 M6.8,-4.4 l1.1,-1 M8.6,-2.8 l1.2,-0.7 M-1,-6.2 l0,-1.1" stroke="#27344f" stroke-width="0.7"/></g><g transform="translate(0.0,2.5)"><g transform="scale(0.92)"><path d="M-8,-1 A8,7 0 0 1 5,-6.2 L6.5,-8.5 L8.5,-1.5 L1.5,-2.2 L3.2,-4 A5,4.5 0 0 0 -4.4,-1 Z" fill="#58c038" stroke="#6a8a10" stroke-width="0.6"/><path d="M8,1 A8,7 0 0 1 -5,6.2 L-6.5,8.5 L-8.5,1.5 L-1.5,2.2 L-3.2,4 A5,4.5 0 0 0 4.4,1 Z" fill="#e8d820" stroke="#6a8a10" stroke-width="0.6"/></g></g></g>
<g transform="translate(188.0,78.0)"><g transform="translate(0.0,-3.2) scale(1.00)"><path d="M-9.5,2 Q-3,-6.5 4,-5 Q8.5,-3.5 10,0.5 Q4,3.5 -2,3 Q-6,2.6 -9.5,2 Z" fill="url(#gEye)"/><path d="M-9.5,2 Q-3,-7 4,-5.4 Q8.5,-4 10,0.5" fill="none" stroke="#27344f" stroke-width="1.4"/><ellipse cx="0.5" cy="-0.8" rx="3.6" ry="3.2" fill="#39527e"/><circle cx="0.5" cy="-0.8" r="1.6" fill="#101828"/><path d="M-9.5,2.4 Q-2,4 10,0.8" fill="none" stroke="#c8a0b0" stroke-width="0.7"/><path d="M2,-6 l0.5,-1.2 M4.5,-5.4 l0.8,-1.2 M6.8,-4.4 l1.1,-1 M8.6,-2.8 l1.2,-0.7 M-1,-6.2 l0,-1.1" stroke="#27344f" stroke-width="0.7"/></g><path d="M-9.5,2.5 h7.0 M-6.0,-1.0 v7.0" stroke="#5ed024" stroke-width="2.2"/><path d="M-3.500,9 L2.500,0" stroke="#222" stroke-width="1.200"/><path d="M1.7,7.5 h7.6" stroke="#e8dc00" stroke-width="2.4"/><path d="M2.2,8.9 h7.6" stroke="#8a8200" stroke-width="0.6"/></g>
<g transform="translate(214.0,78.0)"><g transform="translate(0.0,-3.2) scale(1.00)"><path d="M-9.5,2 Q-3,-6.5 4,-5 Q8.5,-3.5 10,0.5 Q4,3.5 -2,3 Q-6,2.6 -9.5,2 Z" fill="url(#gEye)"/><path d="M-9.5,2 Q-3,-7 4,-5.4 Q8.5,-4 10,0.5" fill="none" stroke="#27344f" stroke-width="1.4"/><ellipse cx="0.5" cy="-0.8" rx="3.6" ry="3.2" fill="#39527e"/><circle cx="0.5" cy="-0.8" r="1.6" fill="#101828"/><path d="M-9.5,2.4 Q-2,4 10,0.8" fill="none" stroke="#c8a0b0" stroke-width="0.7"/><path d="M2,-6 l0.5,-1.2 M4.5,-5.4 l0.8,-1.2 M6.8,-4.4 l1.1,-1 M8.6,-2.8 l1.2,-0.7 M-1,-6.2 l0,-1.1" stroke="#27344f" stroke-width="0.7"/></g><path d="M-4.0,5.5 h9.0 M0.5,1.0 v9.0" stroke="#5ed024" stroke-width="2.6"/></g>
<g transform="translate(240.0,78.0)"><g transform="translate(0.0,-3.2) scale(1.00)"><path d="M-9.5,2 Q-3,-6.5 4,-5 Q8.5,-3.5 10,0.5 Q4,3.5 -2,3 Q-6,2.6 -9.5,2 Z" fill="url(#gEye)"/><path d="M-9.5,2 Q-3,-7 4,-5.4 Q8.5,-4 10,0.5" fill="none" stroke="#27344f" stroke-width="1.4"/><ellipse cx="0.5" cy="-0.8" rx="3.6" ry="3.2" fill="#39527e"/><circle cx="0.5" cy="-0.8" r="1.6" fill="#101828"/><path d="M-9.5,2.4 Q-2,4 10,0.8" fill="none" stroke="#c8a0b0" stroke-width="0.7"/><path d="M2,-6 l0.5,-1.2 M4.5,-5.4 l0.8,-1.2 M6.8,-4.4 l1.1,-1 M8.6,-2.8 l1.2,-0.7 M-1,-6.2 l0,-1.1" stroke="#27344f" stroke-width="0.7"/></g><path d="M-2.0,4.0 h10.0" stroke="#e8dc00" stroke-width="2.8"/><path d="M-1.5,5.6 h10.0" stroke="#8a8200" stroke-width="0.6"/></g>
<g transform="translate(283.0,78.0)"><g transform="scale(1.00)"><path d="M-8,-1 A8,7 0 0 1 5,-6.2 L6.5,-8.5 L8.5,-1.5 L1.5,-2.2 L3.2,-4 A5,4.5 0 0 0 -4.4,-1 Z" fill="url(#gRef)" stroke="#2f5fa8" stroke-width="0.6"/><path d="M8,1 A8,7 0 0 1 -5,6.2 L-6.5,8.5 L-8.5,1.5 L-1.5,2.2 L-3.2,4 A5,4.5 0 0 0 4.4,1 Z" fill="url(#gRef)" stroke="#2f5fa8" stroke-width="0.6"/></g></g>
<g transform="translate(310.5,78.9)"><path d="M-5.2,-6.3 L-5.2,6.3 A5.2,2 0 0 0 5.2,6.3 L5.2,-6.3 A5.2,2 0 0 0 -5.2,-6.3 Z" fill="none" stroke="#222" stroke-width="1"/><ellipse cx="0" cy="-6.3" rx="5.2" ry="2" fill="none" stroke="#222" stroke-width="1"/><path d="M-5.500,6.500 A5.500,2 0 0 1 5.500,6.500" fill="none" stroke="#222" stroke-width="0.7"/></g>
<g transform="translate(336.5,78.9)"><path d="M-5.2,-6.3 L-5.2,6.3 A5.2,2 0 0 0 5.2,6.3 L5.2,-6.3 A5.2,2 0 0 0 -5.2,-6.3 Z" fill="none" stroke="#222" stroke-width="1"/><ellipse cx="0" cy="-6.3" rx="5.2" ry="2" fill="none" stroke="#222" stroke-width="1"/></g>
<g transform="translate(362.5,78.9)"><path d="M-5.2,-6.3 L-5.2,6.3 A5.2,2 0 0 0 5.2,6.3 L5.2,-6.3 A5.2,2 0 0 0 -5.2,-6.3 Z" fill="none" stroke="#444" stroke-width="1"/><ellipse cx="0" cy="-6.3" rx="5.2" ry="2" fill="none" stroke="#444" stroke-width="1"/><path d="M-5.500,6.500 A5.500,2 0 0 1 5.500,6.500" fill="none" stroke="#888" stroke-width="0.7"/></g>
<g transform="translate(388.5,78.9)"><ellipse cx="3" cy="7.9" rx="7" ry="1.6" fill="#555" opacity="0.45"/><path d="M-5.2,-6.3 L-5.2,6.3 A5.2,2 0 0 0 5.2,6.3 L5.2,-6.3 A5.2,2 0 0 0 -5.2,-6.3 Z" fill="url(#gCylB)" stroke="#18e0f0" stroke-width="1.1"/><ellipse cx="0" cy="-6.3" rx="5.2" ry="2" fill="#8fb0e8" stroke="#18e0f0" stroke-width="1.1"/></g>
<rect x="401.500" y="66.500" width="23.500" height="23.500" fill="#ffe07a" stroke="#e8c050" stroke-width="1"/>
<g transform="translate(414.5,78.9)"><ellipse cx="3" cy="7.9" rx="7" ry="1.6" fill="#555" opacity="0.45"/><path d="M-5.2,-6.3 L-5.2,6.3 A5.2,2 0 0 0 5.2,6.3 L5.2,-6.3 A5.2,2 0 0 0 -5.2,-6.3 Z" fill="url(#gCylB)" stroke="#101830" stroke-width="1"/><ellipse cx="0" cy="-6.3" rx="5.2" ry="2" fill="#5a80c8" stroke="#101830" stroke-width="1"/></g>
<g transform="translate(440.5,78.9)"><ellipse cx="3" cy="7.9" rx="7" ry="1.6" fill="#555" opacity="0.45"/><path d="M-5.2,-6.3 L-5.2,6.3 A5.2,2 0 0 0 5.2,6.3 L5.2,-6.3 A5.2,2 0 0 0 -5.2,-6.3 Z" fill="url(#gCylL)" stroke="#30e0f0" stroke-width="1.1"/><ellipse cx="0" cy="-6.3" rx="5.2" ry="2" fill="#eef4ff" stroke="#30e0f0" stroke-width="1.1"/></g>
<g transform="translate(466.5,78.9)"><ellipse cx="3" cy="7.9" rx="7" ry="1.6" fill="#555" opacity="0.45"/><path d="M-5.2,-6.3 L-5.2,6.3 A5.2,2 0 0 0 5.2,6.3 L5.2,-6.3 A5.2,2 0 0 0 -5.2,-6.3 Z" fill="url(#gCylL)" stroke="#5a6a90" stroke-width="1"/><ellipse cx="0" cy="-6.3" rx="5.2" ry="2" fill="#eef4ff" stroke="#5a6a90" stroke-width="1"/></g>
<g transform="translate(492.5,78.9)"><path d="M-5.2,-6.3 L-5.2,6.3 A5.2,2 0 0 0 5.2,6.3 L5.2,-6.3 A5.2,2 0 0 0 -5.2,-6.3 Z" fill="none" stroke="#222" stroke-width="1"/><ellipse cx="0" cy="-6.3" rx="5.2" ry="2" fill="none" stroke="#222" stroke-width="1"/><path d="M-3,-6 L-1,7.500 L1.500,-6 L3.500,7.500 M-4,7 L-1.500,-6 M4,-6 L1.500,8" fill="none" stroke="#333" stroke-width="0.7"/></g>
<g transform="translate(517.5,78.0)"><g transform="translate(-4.0,-3.0)"><path d="M-4.5,-5.0 L-4.5,5.0 A4.5,2 0 0 0 4.5,5.0 L4.5,-5.0 A4.5,2 0 0 0 -4.5,-5.0 Z" fill="none" stroke="#555" stroke-width="1"/><ellipse cx="0" cy="-5.0" rx="4.5" ry="2" fill="none" stroke="#555" stroke-width="1"/></g><g transform="translate(4.0,2.5)"><path d="M-4.8,-5.0 L-4.8,5.0 A4.8,2 0 0 0 4.8,5.0 L4.8,-5.0 A4.8,2 0 0 0 -4.8,-5.0 Z" fill="url(#gCylB)" stroke="#182858" stroke-width="1"/><ellipse cx="0" cy="-5.0" rx="4.8" ry="2" fill="#6a8cd0" stroke="#182858" stroke-width="1"/></g><path d="M1,-9 l4,1 l-1,3.500 Z M-4,9 l-3.500,-1.500 l2.500,-2.500 Z" fill="#30b030"/></g>
<g transform="translate(544.0,78.0)"><g transform="translate(-3.0,-1.5)"><path d="M-5.2,-6.0 L-5.2,6.0 A5.2,2 0 0 0 5.2,6.0 L5.2,-6.0 A5.2,2 0 0 0 -5.2,-6.0 Z" fill="url(#gCylB)" stroke="#182858" stroke-width="1"/><ellipse cx="0" cy="-6.0" rx="5.2" ry="2" fill="#6a8cd0" stroke="#182858" stroke-width="1"/></g><g transform="translate(4.0,3.0)"><g transform="scale(0.62)"><path d="M-8,-1 A8,7 0 0 1 5,-6.2 L6.5,-8.5 L8.5,-1.5 L1.5,-2.2 L3.2,-4 A5,4.5 0 0 0 -4.4,-1 Z" fill="url(#gRef)" stroke="#2f5fa8" stroke-width="0.6"/><path d="M8,1 A8,7 0 0 1 -5,6.2 L-6.5,8.5 L-8.5,1.5 L-1.5,2.2 L-3.2,4 A5,4.5 0 0 0 4.4,1 Z" fill="url(#gRef)" stroke="#2f5fa8" stroke-width="0.6"/></g></g></g>
<g transform="translate(570.5,78.0)"><rect x="-8.500" y="-8" width="17" height="13" fill="#5a6a88" stroke="#8a8a8a" stroke-width="1.200"/><path d="M-7,7 L5,-5" stroke="#4a80d0" stroke-width="2.600" stroke-linecap="round"/><path d="M7,7 L-4,-4" stroke="#c8c8c8" stroke-width="2.400" stroke-linecap="round"/><circle cx="-5" cy="-5" r="2.600" fill="none" stroke="#d8d8d8" stroke-width="1.600"/></g>
<g transform="translate(611.0,78.0)"><g transform="translate(0.0,-1.5)"><g transform="translate(-4.0,-3.5)"><polygon points="0,-5.8 5.0,-2.9 0,0 -5.0,-2.9" fill="#e0e0e0" stroke="#333" stroke-width="0.6"/><polygon points="-5.0,-2.9 0,0 0,5.8 -5.0,2.9" fill="#8a8a8a" stroke="#333" stroke-width="0.6"/><polygon points="5.0,-2.9 0,0 0,5.8 5.0,2.9" fill="#5a5a5a" stroke="#333" stroke-width="0.6"/></g><g transform="translate(4.5,-3.5)"><polygon points="0,-5.8 5.0,-2.9 0,0 -5.0,-2.9" fill="#f8f8f8" stroke="#555" stroke-width="0.6"/><polygon points="-5.0,-2.9 0,0 0,5.8 -5.0,2.9" fill="#e8e8e8" stroke="#555" stroke-width="0.6"/><polygon points="5.0,-2.9 0,0 0,5.8 5.0,2.9" fill="#d0d0d0" stroke="#555" stroke-width="0.6"/></g></g><path d="M-9.3,6.5 h7.6 M-5.5,2.7 v7.6" stroke="#5ed024" stroke-width="2.2"/><path d="M1.0,3.5 l5,5 M5.5,4.3 a3,3 0 1 1 1.5,5.2" fill="none" stroke="#3f74c8" stroke-width="1.5"/></g>
<g transform="translate(638.0,78.0)"><g transform="translate(0.0,-1.5)"><g transform="translate(-4.0,-3.5)"><polygon points="0,-5.8 5.0,-2.9 0,0 -5.0,-2.9" fill="#e0e0e0" stroke="#333" stroke-width="0.6"/><polygon points="-5.0,-2.9 0,0 0,5.8 -5.0,2.9" fill="#8a8a8a" stroke="#333" stroke-width="0.6"/><polygon points="5.0,-2.9 0,0 0,5.8 5.0,2.9" fill="#5a5a5a" stroke="#333" stroke-width="0.6"/></g><g transform="translate(4.5,-3.5)"><polygon points="0,-5.8 5.0,-2.9 0,0 -5.0,-2.9" fill="#f8f8f8" stroke="#555" stroke-width="0.6"/><polygon points="-5.0,-2.9 0,0 0,5.8 -5.0,2.9" fill="#e8e8e8" stroke="#555" stroke-width="0.6"/><polygon points="5.0,-2.9 0,0 0,5.8 5.0,2.9" fill="#d0d0d0" stroke="#555" stroke-width="0.6"/></g></g><rect x="-7.8" y="-2.0" width="5.6" height="12" rx="2" fill="#111"/><circle cx="-5.0" cy="1.2" r="2" fill="#f0c000"/><circle cx="-5.0" cy="7.0" r="2" fill="#20d020"/><rect x="2.7" y="-2.0" width="5.6" height="12" rx="2" fill="#111"/><circle cx="5.5" cy="1.2" r="2" fill="#f01818"/><circle cx="5.5" cy="7.0" r="2" fill="#f0c000"/></g>
<g transform="translate(664.0,78.0)"><g transform="translate(0.0,-1.5)"><g transform="translate(-4.0,-3.5)"><polygon points="0,-5.8 5.0,-2.9 0,0 -5.0,-2.9" fill="#e0e0e0" stroke="#333" stroke-width="0.6"/><polygon points="-5.0,-2.9 0,0 0,5.8 -5.0,2.9" fill="#8a8a8a" stroke="#333" stroke-width="0.6"/><polygon points="5.0,-2.9 0,0 0,5.8 5.0,2.9" fill="#5a5a5a" stroke="#333" stroke-width="0.6"/></g><g transform="translate(4.5,-3.5)"><polygon points="0,-5.8 5.0,-2.9 0,0 -5.0,-2.9" fill="#f8f8f8" stroke="#555" stroke-width="0.6"/><polygon points="-5.0,-2.9 0,0 0,5.8 -5.0,2.9" fill="#e8e8e8" stroke="#555" stroke-width="0.6"/><polygon points="5.0,-2.9 0,0 0,5.8 5.0,2.9" fill="#d0d0d0" stroke="#555" stroke-width="0.6"/></g></g><g transform="translate(0.0,3.5)"><g transform="scale(0.88)"><path d="M-8,-1 A8,7 0 0 1 5,-6.2 L6.5,-8.5 L8.5,-1.5 L1.5,-2.2 L3.2,-4 A5,4.5 0 0 0 -4.4,-1 Z" fill="#58c038" stroke="#6a8a10" stroke-width="0.6"/><path d="M8,1 A8,7 0 0 1 -5,6.2 L-6.5,8.5 L-8.5,1.5 L-1.5,2.2 L-3.2,4 A5,4.5 0 0 0 4.4,1 Z" fill="#e8d820" stroke="#6a8a10" stroke-width="0.6"/></g></g></g>
<g transform="translate(690.0,78.0)"><g transform="translate(0.0,-1.5)"><g transform="translate(-4.0,-3.5)"><polygon points="0,-5.8 5.0,-2.9 0,0 -5.0,-2.9" fill="#e0e0e0" stroke="#333" stroke-width="0.6"/><polygon points="-5.0,-2.9 0,0 0,5.8 -5.0,2.9" fill="#8a8a8a" stroke="#333" stroke-width="0.6"/><polygon points="5.0,-2.9 0,0 0,5.8 5.0,2.9" fill="#5a5a5a" stroke="#333" stroke-width="0.6"/></g><g transform="translate(4.5,-3.5)"><polygon points="0,-5.8 5.0,-2.9 0,0 -5.0,-2.9" fill="#f8f8f8" stroke="#555" stroke-width="0.6"/><polygon points="-5.0,-2.9 0,0 0,5.8 -5.0,2.9" fill="#e8e8e8" stroke="#555" stroke-width="0.6"/><polygon points="5.0,-2.9 0,0 0,5.8 5.0,2.9" fill="#d0d0d0" stroke="#555" stroke-width="0.6"/></g></g><path d="M-10.0,3.0 h7.0 M-6.5,-0.5 v7.0" stroke="#5ed024" stroke-width="2.2"/><path d="M-3.500,9.500 L2.500,0.500" stroke="#222" stroke-width="1.200"/><path d="M2.2,8.0 h7.6" stroke="#e8dc00" stroke-width="2.4"/><path d="M2.7,9.4 h7.6" stroke="#8a8200" stroke-width="0.6"/></g>
<g transform="translate(717.5,78.9)"><ellipse cx="3" cy="7.9" rx="7" ry="1.6" fill="#555" opacity="0.45"/><path d="M-5.2,-6.3 L-5.2,6.3 A5.2,2 0 0 0 5.2,6.3 L5.2,-6.3 A5.2,2 0 0 0 -5.2,-6.3 Z" fill="url(#gCylB)" stroke="#101830" stroke-width="1"/><ellipse cx="0" cy="-6.3" rx="5.2" ry="2" fill="#6a8cd0" stroke="#101830" stroke-width="1"/><path d="M0,-4 v10" stroke="#fff" stroke-width="1" stroke-dasharray="2.500,1.500"/></g>
<g transform="translate(743.5,78.9)"><ellipse cx="3" cy="7.9" rx="7" ry="1.6" fill="#555" opacity="0.45"/><path d="M-5.2,-6.3 L-5.2,6.3 A5.2,2 0 0 0 5.2,6.3 L5.2,-6.3 A5.2,2 0 0 0 -5.2,-6.3 Z" fill="url(#gCylL)" stroke="#101830" stroke-width="1"/><ellipse cx="0" cy="-6.3" rx="5.2" ry="2" fill="#9ab0d8" stroke="#101830" stroke-width="1"/><path d="M-1.200,-4.500 v11 M1.800,-4.500 v11" stroke="#e8e040" stroke-width="1.300"/></g>
<g transform="translate(769.5,78.9)"><ellipse cx="3" cy="7.9" rx="7" ry="1.6" fill="#555" opacity="0.45"/><path d="M-5.2,-6.3 L-5.2,6.3 A5.2,2 0 0 0 5.2,6.3 L5.2,-6.3 A5.2,2 0 0 0 -5.2,-6.3 Z" fill="url(#gCylL)" stroke="#30e0f0" stroke-width="1"/><ellipse cx="0" cy="-6.3" rx="5.2" ry="2" fill="#eef4ff" stroke="#30e0f0" stroke-width="1"/><path d="M-3.500,1 L-0.500,5 L5,-3.500" fill="none" stroke="#38b838" stroke-width="2.400"/></g>
<g transform="translate(795.5,79.0)"><ellipse cx="3" cy="7.9" rx="7" ry="1.6" fill="#555" opacity="0.45"/><path d="M-5.2,-6.3 L-5.2,6.3 A5.2,2 0 0 0 5.2,6.3 L5.2,-6.3 A5.2,2 0 0 0 -5.2,-6.3 Z" fill="url(#gCylL)" stroke="#30e0f0" stroke-width="1"/><ellipse cx="0" cy="-6.3" rx="5.2" ry="2" fill="#eef4ff" stroke="#30e0f0" stroke-width="1"/><rect x="2.500" y="-10.500" width="5.500" height="5.500" fill="#f0c080" stroke="#d09020" stroke-width="1"/><path d="M-12,5 l6,-1.500 v4 Z" fill="#444" opacity="0.7"/></g>
<g transform="translate(821.5,78.9)"><path d="M-5.2,-6.3 L-5.2,6.3 A5.2,2 0 0 0 5.2,6.3 L5.2,-6.3 A5.2,2 0 0 0 -5.2,-6.3 Z" fill="none" stroke="#5a98e0" stroke-width="1"/><ellipse cx="0" cy="-6.3" rx="5.2" ry="2" fill="none" stroke="#5a98e0" stroke-width="1"/><path d="M-3,-6 L-1,7.500 L1.500,-6 L3.500,7.500 M-4,7 L-1.500,-6 M4,-6 L1.500,8" fill="none" stroke="#5a98e0" stroke-width="0.7"/></g>
<g transform="translate(847.0,78.0)"><polygon points="0,-8 8.500,-4.500 0,-1 -8.500,-4.500" fill="#4a78d0" stroke="#0c1430" stroke-width="0.8"/><polygon points="-8.500,-4.500 0,-1 0,9 -6.500,3" fill="#2a4c98" stroke="#0c1430" stroke-width="0.8"/><polygon points="8.500,-4.500 0,-1 0,9 6.500,3" fill="#142a60" stroke="#0c1430" stroke-width="0.8"/></g>
<g transform="translate(888.0,78.0)"><path d="M-3,2.500 L-8.500,8.500" stroke="#8a8a8a" stroke-width="3" stroke-linecap="round"/><path d="M-3,2.500 L-8.500,8.500" stroke="#e0e0e0" stroke-width="1.200" stroke-linecap="round"/><circle cx="0.500" cy="-2.500" r="5.800" fill="url(#gLens)" stroke="#a0a4ac" stroke-width="1.500"/><path d="M-1.500,-5.500 l5,3 l-5,3 Z" fill="#d0d8e4" stroke="#7a8a9a" stroke-width="0.600"/><g transform="translate(5.5,5.5)"><polygon points="0,-4.8 4.2,-2.4 0,0 -4.2,-2.4" fill="#9a9a9a" stroke="#333" stroke-width="0.6"/><polygon points="-4.2,-2.4 0,0 0,4.8 -4.2,2.4" fill="#6a6a6a" stroke="#333" stroke-width="0.6"/><polygon points="4.2,-2.4 0,0 0,4.8 4.2,2.4" fill="#444" stroke="#333" stroke-width="0.6"/></g><path d="M-10,-8 h4 M-8,-10 v4 M-10,-4.500 h4" stroke="#000" stroke-width="1"/></g>
<g transform="translate(914.5,78.0)"><path d="M-3,2.500 L-8.500,8.500" stroke="#8a8a8a" stroke-width="3" stroke-linecap="round"/><path d="M-3,2.500 L-8.500,8.500" stroke="#e0e0e0" stroke-width="1.200" stroke-linecap="round"/><circle cx="0.500" cy="-2.500" r="5.800" fill="url(#gLens)" stroke="#a0a4ac" stroke-width="1.500"/><path d="M-1.500,-5.500 l5,3 l-5,3 Z" fill="#d0d8e4" stroke="#7a8a9a" stroke-width="0.600"/><g transform="translate(5.5,5.5)"><polygon points="0,-4.8 4.2,-2.4 0,0 -4.2,-2.4" fill="#9a9a9a" stroke="#333" stroke-width="0.6"/><polygon points="-4.2,-2.4 0,0 0,4.8 -4.2,2.4" fill="#6a6a6a" stroke="#333" stroke-width="0.6"/><polygon points="4.2,-2.4 0,0 0,4.8 4.2,2.4" fill="#444" stroke="#333" stroke-width="0.6"/></g><path d="M-9.5,-9.5 l3,3 M-6.5,-9.5 l-3,3" stroke="#30b030" stroke-width="1.400"/><path d="M6.5,-9.5 l3,3 M9.5,-9.5 l-3,3" stroke="#30b030" stroke-width="1.400"/><path d="M-9.5,6.5 l3,3 M-6.5,6.5 l-3,3" stroke="#30b030" stroke-width="1.400"/><path d="M6.5,6.5 l3,3 M9.5,6.5 l-3,3" stroke="#30b030" stroke-width="1.400"/></g>
<g transform="translate(940.5,78.0)"><rect x="-6.500" y="-6" width="13" height="12" fill="#e8eefc" stroke="#101040" stroke-width="1.200"/><text x="0" y="3.500" font-size="8.500" font-weight="bold" text-anchor="middle" font-family="Liberation Sans,sans-serif" fill="#101010">1:1</text><path d="M-9.5,-9.5 l3,3 M-6.5,-9.5 l-3,3" stroke="#30b030" stroke-width="1.400"/><path d="M6.5,-9.5 l3,3 M9.5,-9.5 l-3,3" stroke="#30b030" stroke-width="1.400"/><path d="M-9.5,6.5 l3,3 M-6.5,6.5 l-3,3" stroke="#30b030" stroke-width="1.400"/><path d="M6.5,6.5 l3,3 M9.5,6.5 l-3,3" stroke="#30b030" stroke-width="1.400"/></g>
<g transform="translate(967.0,78.0)"><path d="M-6,6 L5,-5" stroke="#30a830" stroke-width="2.200"/><path d="M8.500,-8.500 L1.500,-6.500 L6.500,-1.500 Z" fill="#30a830"/><circle cx="-6.500" cy="6.500" r="2.800" fill="#c8c8c8" stroke="#555" stroke-width="0.7"/></g>
<g transform="translate(992.5,78.0)"><g transform="scale(1.00)"><path d="M-8,-1 A8,7 0 0 1 5,-6.2 L6.5,-8.5 L8.5,-1.5 L1.5,-2.2 L3.2,-4 A5,4.5 0 0 0 -4.4,-1 Z" fill="#48b838" stroke="#1c6c14" stroke-width="0.6"/><path d="M8,1 A8,7 0 0 1 -5,6.2 L-6.5,8.5 L-8.5,1.5 L-1.5,2.2 L-3.2,4 A5,4.5 0 0 0 4.4,1 Z" fill="#2c9820" stroke="#1c6c14" stroke-width="0.6"/></g></g>
<g transform="translate(1018.5,78.0)"><g transform="translate(0.0,-5.5) scale(0.85)"><path d="M-9.5,2 Q-3,-6.5 4,-5 Q8.5,-3.5 10,0.5 Q4,3.5 -2,3 Q-6,2.6 -9.5,2 Z" fill="url(#gEye)"/><path d="M-9.5,2 Q-3,-7 4,-5.4 Q8.5,-4 10,0.5" fill="none" stroke="#27344f" stroke-width="1.4"/><ellipse cx="0.5" cy="-0.8" rx="3.6" ry="3.2" fill="#39527e"/><circle cx="0.5" cy="-0.8" r="1.6" fill="#101828"/><path d="M-9.5,2.4 Q-2,4 10,0.8" fill="none" stroke="#c8a0b0" stroke-width="0.7"/><path d="M2,-6 l0.5,-1.2 M4.5,-5.4 l0.8,-1.2 M6.8,-4.4 l1.1,-1 M8.6,-2.8 l1.2,-0.7 M-1,-6.2 l0,-1.1" stroke="#27344f" stroke-width="0.7"/></g><circle cx="0" cy="3.500" r="6" fill="#f8d040" stroke="#c89010" stroke-width="0.7"/><circle cx="-2" cy="2" r="0.800" fill="#222"/><circle cx="2" cy="2" r="0.800" fill="#222"/><path d="M-3,5 Q0,8 3,5" fill="none" stroke="#222" stroke-width="0.700"/></g>
<g transform="translate(1061.0,78.0)"><polygon points="-9,2 1,-4 10,1 0,8" fill="#e8eef8" stroke="#98a8c0" stroke-width="0.6"/><path d="M-3,2 v-10" stroke="#2060e0" stroke-width="1.400"/><path d="M-3,-10.500 l-2,3 h4 Z" fill="#2060e0"/><path d="M-3,2 L5,-2.500" stroke="#20a020" stroke-width="1.400"/><path d="M7,-3.800 l-3.400,0.200 l1.500,2.500 Z" fill="#20a020"/><path d="M-3,2 L5,7" stroke="#e02020" stroke-width="1.400"/><path d="M7,8.200 l-3.500,-0.300 l1.700,-2.500 Z" fill="#e02020"/><circle cx="-3" cy="2" r="1.500" fill="#fff" stroke="#555" stroke-width="0.500"/></g>
<g transform="translate(1088.0,78.0)"><g transform="translate(3.0,-4.0) scale(0.60)"><polygon points="-9,2 1,-4 10,1 0,8" fill="#e8eef8" stroke="#98a8c0" stroke-width="0.6"/><path d="M-3,2 v-10" stroke="#2060e0" stroke-width="1.400"/><path d="M-3,-10.500 l-2,3 h4 Z" fill="#2060e0"/><path d="M-3,2 L5,-2.500" stroke="#20a020" stroke-width="1.400"/><path d="M7,-3.800 l-3.400,0.200 l1.500,2.500 Z" fill="#20a020"/><path d="M-3,2 L5,7" stroke="#e02020" stroke-width="1.400"/><path d="M7,8.200 l-3.500,-0.300 l1.700,-2.500 Z" fill="#e02020"/><circle cx="-3" cy="2" r="1.500" fill="#fff" stroke="#555" stroke-width="0.500"/></g><path d="M-9,9 v-6 h-2.500 l5,-6 l5,6 h-2.500 v6 Z" fill="#38b038" stroke="#1c7a1c" stroke-width="0.600" transform="rotate(35 -4 3)"/><rect x="0" y="3" width="9" height="5.500" fill="#e0e0e0" stroke="#7a7a7a" stroke-width="1"/></g>
<g transform="translate(1114.0,78.0)"><g transform="translate(4.0,-4.0) scale(0.60)"><polygon points="-9,2 1,-4 10,1 0,8" fill="#e8eef8" stroke="#98a8c0" stroke-width="0.6"/><path d="M-3,2 v-10" stroke="#2060e0" stroke-width="1.400"/><path d="M-3,-10.500 l-2,3 h4 Z" fill="#2060e0"/><path d="M-3,2 L5,-2.500" stroke="#20a020" stroke-width="1.400"/><path d="M7,-3.800 l-3.400,0.200 l1.500,2.500 Z" fill="#20a020"/><path d="M-3,2 L5,7" stroke="#e02020" stroke-width="1.400"/><path d="M7,8.200 l-3.500,-0.300 l1.700,-2.500 Z" fill="#e02020"/><circle cx="-3" cy="2" r="1.500" fill="#fff" stroke="#555" stroke-width="0.500"/></g><path d="M-9,9 v-6 h-2.500 l5,-6 l5,6 h-2.500 v6 Z" fill="#38b038" stroke="#1c7a1c" stroke-width="0.600" transform="rotate(-135 -3 2)"/><path d="M-2,-6 v5 h2.500 l-5,6 l-5,-6 h2.500 v-5 Z" fill="#38b038" stroke="#1c7a1c" stroke-width="0.600" transform="rotate(45 -3 2) translate(5,3) scale(0.800)"/></g>
<g transform="translate(1157.0,78.0)"><rect x="-9.5" y="-9.5" width="6" height="6" fill="#00d8f0"/><rect x="-3.0" y="-9.5" width="6" height="6" fill="#f0e000"/><rect x="3.5" y="-9.5" width="6" height="6" fill="#00e000"/><rect x="-9.5" y="-3.0" width="6" height="6" fill="#f08000"/><rect x="-3.0" y="-3.0" width="6" height="6" fill="#a06000"/><rect x="3.5" y="-3.0" width="6" height="6" fill="#f000f0"/><rect x="-9.5" y="3.5" width="6" height="6" fill="#0000f0"/><rect x="-3.0" y="3.5" width="6" height="6" fill="#00a000"/><rect x="3.5" y="3.5" width="6" height="6" fill="#808080"/></g>
<g transform="translate(1182.5,78.0)"><rect x="-7.500" y="-9" width="15" height="18.500" fill="#eef2fa" stroke="#6a7a9a" stroke-width="1"/><rect x="-5.500" y="-7" width="11" height="1.500" fill="#f0c040"/><rect x="-5.500" y="-4.500" width="11" height="1.200" fill="#b0c0e0"/><rect x="-5.0" y="-1.5" width="3" height="3" fill="#00d8f0"/><rect x="-1.5" y="-1.5" width="3" height="3" fill="#f0e000"/><rect x="2.0" y="-1.5" width="3" height="3" fill="#00e000"/><rect x="-5.0" y="2.0" width="3" height="3" fill="#f08000"/><rect x="-1.5" y="2.0" width="3" height="3" fill="#a06000"/><rect x="2.0" y="2.0" width="3" height="3" fill="#f000f0"/><rect x="-5.0" y="5.5" width="3" height="3" fill="#0000f0"/><rect x="-1.5" y="5.5" width="3" height="3" fill="#00a000"/><rect x="2.0" y="5.5" width="3" height="3" fill="#808080"/></g>
<g transform="translate(1209.0,78.0)"><circle r="9.500" fill="#6a9a3a" stroke="#7a7a7a" stroke-width="1.500"/><path d="M-5,5.500 L4,-4" stroke="#e8e8e8" stroke-width="2.400" stroke-linecap="round"/><path d="M5,5.500 L-3.500,-3.500" stroke="#c8c8c8" stroke-width="2.200" stroke-linecap="round"/><circle cx="-4.500" cy="-4.500" r="2.200" fill="none" stroke="#e8e8e8" stroke-width="1.500"/></g>
<g transform="translate(1234.5,78.0)"><rect x="-9" y="-9" width="18" height="18.500" fill="#e8eef8" stroke="#4a5a7a" stroke-width="1"/><rect x="-9" y="-9" width="18" height="3.500" fill="#3a5a9a"/><path d="M-6.500,-3 v11" stroke="#c06020" stroke-width="1.800" stroke-dasharray="2,1.200"/><path d="M-3,-3.500 h10" stroke="#a0a020" stroke-width="1.800" stroke-dasharray="2,1.200"/><path d="M-3,7 L6,-1" stroke="#4a80d0" stroke-width="2" stroke-linecap="round"/><path d="M6,7 L-2,0" stroke="#b0b8c8" stroke-width="1.800" stroke-linecap="round"/></g>
<g transform="translate(1261.0,78.0)"><rect x="-8.500" y="-7.500" width="17" height="15" fill="none" stroke="#2a3a8a" stroke-width="1.200" stroke-dasharray="1.500,2"/><path d="M-4,-2 Q-1,-8 5,-6 L9,-3 L6,0 L1,0 L-2,2 Z" fill="#e8b870" stroke="#a87830" stroke-width="0.600"/><circle cx="-6" cy="5.500" r="3" fill="#f0e000" stroke="#2040c0" stroke-width="0.800"/><path d="M-6,3.500 v4 M-8,5.500 h4" stroke="#2040c0" stroke-width="0.900"/></g>
<g transform="translate(1287.5,78.0)"><polygon points="-5,-7.500 9.500,-8.500 5,7 -9.500,8" fill="#d07088" stroke="#2a4ab0" stroke-width="1.600"/><path d="M-1.300,-7.800 L-5.800,7.700 M2.400,-8 L-2.100,7.500 M6,-8.300 L1.500,7.200 M-6.500,-2.500 L8,-3.500 M-8,2.500 L6.500,1.500" stroke="#f0d0d8" stroke-width="0.800"/></g>
<g transform="translate(17.5,142.7)"><path d="M-9,-3 l4,-4 M-9.500,0 l3,-3 M-9,2.500 l2.500,-2.500" stroke="#a8b8d0" stroke-width="1.200"/><path d="M-1.500,2.500 L-7,8.500" stroke="#8a8a8a" stroke-width="3" stroke-linecap="round"/><path d="M-1.500,2.500 L-7,8.500" stroke="#e0e0e0" stroke-width="1.200" stroke-linecap="round"/><circle cx="2.500" cy="-2" r="5.800" fill="url(#gLens)" stroke="#a0a4ac" stroke-width="1.600"/><ellipse cx="0" cy="8" rx="7" ry="1.200" fill="#888" opacity="0.400"/></g>
<g transform="translate(44.0,142.7)"><path d="M-7,-7 L7,8 M-3,-9 L-9,-3" stroke="#3a78d8" stroke-width="1.300" stroke-dasharray="3,1.500"/><path d="M2,-8 L7,2" stroke="#3a78d8" stroke-width="1.300"/><path d="M6.500,-7.500 L-4.500,5.500" stroke="#d89030" stroke-width="2.800"/><path d="M5.800,-8 L-5.200,5" stroke="#f0c070" stroke-width="0.800"/><path d="M-4,3.500 L-6.500,8 L-2.500,5.200 Z" fill="#e8c898" stroke="#333" stroke-width="0.400"/><path d="M-5.800,6.700 L-6.500,8 L-5.200,7.200 Z" fill="#222"/><path d="M7.300,-8.500 L5.600,-6.400" stroke="#e03030" stroke-width="2.800"/><ellipse cx="1" cy="7.500" rx="7" ry="1.300" fill="#777" opacity="0.400"/></g><path d="M48.0,132.2 h5 l-2.5,2.8 Z" fill="#000"/>
<g transform="translate(17.5,168.8)"><rect x="-6.500" y="-5.500" width="13" height="11" fill="url(#gDoc)" stroke="#555" stroke-width="1"/><path d="M-9.5,-9.5 l3,3 M-6.5,-9.5 l-3,3" stroke="#30b030" stroke-width="1.400"/><path d="M6.5,-9.5 l3,3 M9.5,-9.5 l-3,3" stroke="#30b030" stroke-width="1.400"/><path d="M-9.5,6.5 l3,3 M-6.5,6.5 l-3,3" stroke="#30b030" stroke-width="1.400"/><path d="M6.5,6.5 l3,3 M9.5,6.5 l-3,3" stroke="#30b030" stroke-width="1.400"/></g>
<g transform="translate(44.0,168.8)"><path d="M-3,-4 A4,4 0 1 0 -6,1 C-2,2 2,-3 6,0 A4,4 0 1 1 1,6" fill="none" stroke="#3a78d8" stroke-width="1.500"/><path d="M6.500,-7.500 L-4.500,5.500" stroke="#d89030" stroke-width="2.800"/><path d="M5.800,-8 L-5.200,5" stroke="#f0c070" stroke-width="0.800"/><path d="M-4,3.500 L-6.500,8 L-2.500,5.200 Z" fill="#e8c898" stroke="#333" stroke-width="0.400"/><path d="M-5.800,6.700 L-6.500,8 L-5.200,7.200 Z" fill="#222"/><path d="M7.300,-8.500 L5.600,-6.400" stroke="#e03030" stroke-width="2.800"/><ellipse cx="1" cy="7.500" rx="7" ry="1.300" fill="#777" opacity="0.400"/></g><path d="M48.0,158.3 h5 l-2.5,2.8 Z" fill="#000"/>
<g transform="translate(17.5,194.8)"><path d="M-3,2.500 L-8.500,8.500" stroke="#8a8a8a" stroke-width="3" stroke-linecap="round"/><path d="M-3,2.500 L-8.500,8.500" stroke="#e0e0e0" stroke-width="1.200" stroke-linecap="round"/><circle cx="0.500" cy="-2.500" r="5.800" fill="url(#gLens)" stroke="#a0a4ac" stroke-width="1.500"/><path d="M-1.500,-5.500 l5,3 l-5,3 Z" fill="#d0d8e4" stroke="#7a8a9a" stroke-width="0.600"/><g transform="translate(5.5,5.5)"><polygon points="0,-4.8 4.2,-2.4 0,0 -4.2,-2.4" fill="#9a9a9a" stroke="#333" stroke-width="0.6"/><polygon points="-4.2,-2.4 0,0 0,4.8 -4.2,2.4" fill="#6a6a6a" stroke="#333" stroke-width="0.6"/><polygon points="4.2,-2.4 0,0 0,4.8 4.2,2.4" fill="#444" stroke="#333" stroke-width="0.6"/></g><path d="M-11,-9 h4 M-9,-11 v4 M-11,-5.500 h4" stroke="#000" stroke-width="1"/></g><path d="M21.5,184.3 h5 l-2.5,2.8 Z" fill="#000"/>
<g transform="translate(44.0,194.8)"><path d="M-8,-7.500 H8 V0 H5.500 V8 H-8 Z" fill="none" stroke="#f0e800" stroke-width="1.600"/><path d="M-4.500,0 L-1,5 L6,-5.500" fill="none" stroke="#38b838" stroke-width="2.800"/></g><path d="M48.0,184.3 h5 l-2.5,2.8 Z" fill="#000"/>
<g transform="translate(17.5,221.0)"><polygon points="-9,2 1,-4 10,1 0,8" fill="#e8eef8" stroke="#98a8c0" stroke-width="0.600"/><path d="M-4,3 v-10" stroke="#2080f0" stroke-width="1.600"/><path d="M-4,-10 l-2.200,3.500 h4.400 Z" fill="#2080f0"/><path d="M-4,3 L4,-2" stroke="#20b020" stroke-width="1.600"/><path d="M6.500,-3.600 l-4,0.200 l1.800,3 Z" fill="#20b020"/><path d="M-4,3 L3,7.500" stroke="#e02020" stroke-width="1.600"/><path d="M5.500,9 l-4,-0.400 l2,-2.800 Z" fill="#e02020"/><circle cx="-4" cy="3" r="1.700" fill="#e8e8e8" stroke="#555" stroke-width="0.500"/></g><path d="M21.5,210.5 h5 l-2.5,2.8 Z" fill="#000"/>
<g transform="translate(44.0,221.0)"><path d="M-8,2 C-6,-12 -2,-10 0,0 C2,10 6,10 8,-2" fill="none" stroke="#3a78d8" stroke-width="1.600"/><path d="M6.500,-7.500 L-4.500,5.500" stroke="#d89030" stroke-width="2.800"/><path d="M5.800,-8 L-5.200,5" stroke="#f0c070" stroke-width="0.800"/><path d="M-4,3.500 L-6.500,8 L-2.500,5.200 Z" fill="#e8c898" stroke="#333" stroke-width="0.400"/><path d="M-5.800,6.700 L-6.500,8 L-5.200,7.200 Z" fill="#222"/><path d="M7.300,-8.500 L5.600,-6.400" stroke="#e03030" stroke-width="2.800"/><ellipse cx="1" cy="7.500" rx="7" ry="1.300" fill="#777" opacity="0.400"/></g><path d="M48.0,210.5 h5 l-2.5,2.8 Z" fill="#000"/>
<g transform="translate(17.5,247.0)"><path d="M-9,-7.500 h10 M-9,-5.200 h11 M-8,-2.900 h11 M-8,-0.600 h10" stroke="#6f8fe0" stroke-width="1.600"/><path d="M-8.500,-6.400 h10 M-8.500,-4 h11 M-8,-1.700 h11" stroke="#e8eefc" stroke-width="0.700"/><ellipse cx="0.500" cy="5.500" rx="7.500" ry="4" fill="#c8a070" stroke="#6a4a2a" stroke-width="0.700"/><circle cx="-2.500" cy="6.500" r="1.500" fill="#2040e0"/><circle cx="1" cy="7" r="1.500" fill="#20b020"/><circle cx="4" cy="5" r="1.500" fill="#e02020"/><path d="M9,-8.500 L2,3" stroke="#b06020" stroke-width="1.700"/></g><path d="M21.5,236.5 h5 l-2.5,2.8 Z" fill="#000"/>
<g transform="translate(44.0,247.0)"><polygon points="-3,-7 9,-9 5,7 -9,9" fill="#7ab0f0" stroke="#2050c0" stroke-width="1.400"/><path d="M3,-8 L-2,8 M-6,1 L7,-1" stroke="#e8f2ff" stroke-width="1.400"/></g><path d="M48.0,236.5 h5 l-2.5,2.8 Z" fill="#000"/>
<g transform="translate(17.5,274.0)"><g transform="scale(1.00)"><path d="M-8,-1 A8,7 0 0 1 5,-6.2 L6.5,-8.5 L8.5,-1.5 L1.5,-2.2 L3.2,-4 A5,4.5 0 0 0 -4.4,-1 Z" fill="url(#gRef)" stroke="#2f5fa8" stroke-width="0.6"/><path d="M8,1 A8,7 0 0 1 -5,6.2 L-6.5,8.5 L-8.5,1.5 L-1.5,2.2 L-3.2,4 A5,4.5 0 0 0 4.4,1 Z" fill="url(#gRef)" stroke="#2f5fa8" stroke-width="0.6"/></g></g><path d="M21.5,263.5 h5 l-2.5,2.8 Z" fill="#000"/>
<g transform="translate(44.0,274.0)"><g transform="translate(0.0,0.0)"><polygon points="0,-8.0 6.9,-4.0 0,0 -6.9,-4.0" fill="#e0e0e0" stroke="#444" stroke-width="0.6"/><polygon points="-6.9,-4.0 0,0 0,8.0 -6.9,4.0" fill="#9a9a90" stroke="#444" stroke-width="0.6"/><polygon points="6.9,-4.0 0,0 0,8.0 6.9,4.0" fill="#5a5a52" stroke="#444" stroke-width="0.6"/></g><ellipse cx="2" cy="9" rx="7" ry="1.300" fill="#666" opacity="0.400"/></g><path d="M48.0,263.5 h5 l-2.5,2.8 Z" fill="#000"/>
<g transform="translate(17.5,299.0)"><text x="0" y="5" font-size="19" font-weight="bold" text-anchor="middle" font-family="Liberation Sans,sans-serif" fill="#4a80d0" stroke="#2a5098" stroke-width="0.400">?</text><ellipse cx="0" cy="8.500" rx="7" ry="1.300" fill="#777" opacity="0.450"/></g><path d="M21.5,288.5 h5 l-2.5,2.8 Z" fill="#000"/>
<g transform="translate(44.0,299.0)"><path d="M-8,-7 v15 M8.500,-7 v15" stroke="#555" stroke-width="1.300"/><path d="M-6,-3.500 h12.500" stroke="#f0e000" stroke-width="1.600"/><path d="M-7.500,-3.500 l3.500,-2.500 v5 Z M8,-3.500 l-3.500,-2.500 v5 Z" fill="#f0e000"/></g><path d="M48.0,288.5 h5 l-2.5,2.8 Z" fill="#000"/>
<g transform="translate(17.5,325.0)"><path d="M-7,-5 L-5,8 H5 L7,-5 Z" fill="#9cc8f0" stroke="#4a78b0" stroke-width="0.800"/><ellipse cx="0" cy="-5" rx="7.500" ry="2" fill="#c8e0f8" stroke="#4a78b0" stroke-width="0.800"/><path d="M-2,-9 l2,-1.500 l2,1.500 v3 h-4 Z" fill="#f0e020"/><path d="M-3,-2 L3,6 M3,-2 L-3,6" stroke="#d8f0a0" stroke-width="1.500"/><ellipse cx="2" cy="9" rx="7" ry="1.200" fill="#666" opacity="0.400"/></g><path d="M21.5,314.5 h5 l-2.5,2.8 Z" fill="#000"/>
<g transform="translate(44.0,325.0)"><ellipse cx="0" cy="8.5" rx="7" ry="1.3" fill="#999" opacity="0.5"/><path d="M-8,-2 L-1,-8 L-1,-4.5 A7,7 0 0 1 4,8 A5.5,5.5 0 0 0 -1,0.5 L-1,4 Z" fill="url(#gUndo)" stroke="#8a8a8a" stroke-width="0.5"/></g><path d="M48.0,314.5 h5 l-2.5,2.8 Z" fill="#000"/>
<g transform="translate(17.5,351.5)"><rect x="-10" y="-9" width="3" height="14" fill="#667" stroke="#222" stroke-width="0.500"/><path d="M-8.500,-2 l2,3 l-2,3" stroke="#e8c020" stroke-width="1.200" fill="none"/><circle cx="1" cy="0" r="6.500" fill="none" stroke="#8a4a2a" stroke-width="1.300"/><path d="M1,-9.500 v19 M-8.500,0 h19 M-5.700,-6.700 l13.400,13.400 M7.700,-6.700 l-13.400,13.400" stroke="#8a4a2a" stroke-width="1"/><circle cx="1" cy="0" r="2" fill="#f0b020"/><path d="M-9,7 l5,-3 M-6,9 l8,-5 M-2,10 l8,-5 M2,10 l6,-4" stroke="#f08818" stroke-width="2"/></g><path d="M21.5,341.0 h5 l-2.5,2.8 Z" fill="#000"/>
<g transform="translate(44.0,351.5)"><path d="M-7,-2 h11 l4,4 v8 h-15 Z" fill="url(#gDoc)" stroke="#111" stroke-width="1.200"/><g transform="translate(-1.0,-3.0)"><path d="M-8,-5 h5 l1.5,1.5 h7 v2 h-13.5 Z" fill="#e8c060" stroke="#c09830" stroke-width="0.5"/><path d="M-8,5.5 L-5.5,-2 H9 L6.5,5.5 Z" fill="url(#gFold)" stroke="#c09830" stroke-width="0.6"/></g><path d="M-2,-7 a4,3.500 0 0 1 6,-0.500 l1,-1.500 l1.500,5 l-5,-0.500 l1.200,-1.400 a2.500,2 0 0 0 -3,0.500 Z" fill="#30b030"/></g>
<rect x="64" y="113" width="24" height="24" fill="#86879b"/>
<rect x="92" y="113" width="24" height="24" fill="#86879b"/>
<rect x="120" y="113" width="24" height="24" fill="#86879b"/>
<rect x="148" y="113" width="24" height="24" fill="#86879b"/>
<rect x="176" y="113" width="24" height="24" fill="#86879b"/>
<rect x="204" y="113" width="24" height="24" fill="#86879b"/>
<rect x="232" y="113" width="24" height="24" fill="#86879b"/>
<rect x="260" y="113" width="24" height="24" fill="#86879b"/>
<rect x="288" y="113" width="24" height="24" fill="#86879b"/>
<rect x="316" y="113" width="24" height="24" fill="#86879b"/>
<rect x="344" y="113" width="24" height="24" fill="#86879b"/>
<rect x="64" y="141" width="24" height="24" fill="#86879b"/>
<rect x="64" y="169" width="24" height="24" fill="#86879b"/>
<rect x="64.500" y="197.5" width="23" height="23" fill="#8f855a" stroke="#f0c858" stroke-width="1"/>
<rect x="64" y="225" width="24" height="24" fill="#86879b"/>
<rect x="64" y="253" width="24" height="24" fill="#86879b"/>
<g fill="#3f5788" stroke="#5a6fa0" stroke-width="0.500"><rect x="67" y="116.500" width="18" height="4"/><rect x="67" y="122.800" width="18" height="4"/><rect x="67" y="129" width="18" height="4"/></g>
<g transform="translate(104.0,125.0)"><rect x="-6" y="-5.500" width="12" height="11" fill="url(#gDoc)" stroke="#666" stroke-width="0.800"/><path d="M-9.0,-9.0 l3,3 M-6.0,-9.0 l-3,3" stroke="#48d838" stroke-width="1.400"/><path d="M6.0,-9.0 l3,3 M9.0,-9.0 l-3,3" stroke="#48d838" stroke-width="1.400"/><path d="M-9.0,6.0 l3,3 M-6.0,6.0 l-3,3" stroke="#48d838" stroke-width="1.400"/><path d="M6.0,6.0 l3,3 M9.0,6.0 l-3,3" stroke="#48d838" stroke-width="1.400"/></g>
<g transform="translate(132.0,125.0)"><path d="M-9,-4 l4,-4 M-9.500,-1 l3,-3 M-9,1.500 l2.500,-2.500" stroke="#c8d4e8" stroke-width="1.300"/><path d="M-1.500,2.500 L-7,8.500" stroke="#8a8a8a" stroke-width="3" stroke-linecap="round"/><path d="M-1.500,2.500 L-7,8.500" stroke="#e0e0e0" stroke-width="1.200" stroke-linecap="round"/><circle cx="2.500" cy="-2" r="5.800" fill="url(#gLens)" stroke="#a0a4ac" stroke-width="1.600"/></g>
<g transform="translate(160.0,125.0)"><polygon points="-10,2 0,-4 9,1 -1,8" fill="none" stroke="#666" stroke-width="0.600"/><path d="M-1,3 v-10" stroke="#2080f0" stroke-width="1.800"/><path d="M-1,-11 l-2.500,4 h5 Z" fill="#2080f0"/><path d="M-1,3 L6,-2" stroke="#20b020" stroke-width="1.600"/><path d="M8.500,-3.600 l-4,0.200 l1.800,3 Z" fill="#40d040"/><path d="M-1,3 L5,7.500" stroke="#e02020" stroke-width="1.800"/><path d="M8,9.500 l-4.500,-0.500 l2.200,-3 Z" fill="#e02020"/><circle cx="-1" cy="3" r="1.800" fill="#e8e8e8" stroke="#555" stroke-width="0.500"/></g>
<g transform="translate(188.0,125.5)"><path d="M0.0,-0.8 L0.0,-9.0 M0.0,-0.8 L-9.0,4.0 M0.0,-0.8 L9.0,4.0 " fill="none" stroke="#000" stroke-width="1.150"/><polygon points="0.0,-9.0 9.0,-5.4 0.0,-0.8 -9.0,-5.4" fill="url(#gGreenCube)"/><path d="M0.0,-0.8 L-9.0,-5.4 M0.0,-0.8 L9.0,-5.4 M0.0,-0.8 L0.0,9.2 M0.0,-9.0 L9.0,-5.4 L9.0,4.0 L0.0,9.2 L-9.0,4.0 L-9.0,-5.4 Z" fill="none" stroke="#000" stroke-width="1.150" stroke-linejoin="round"/></g>
<g transform="translate(216.0,125.5)"><path d="M0.0,-0.8 L0.0,-9.0 M0.0,-0.8 L-9.0,4.0 M0.0,-0.8 L9.0,4.0 " fill="none" stroke="#000" stroke-width="1.150"/><polygon points="-9.0,4.0 0.0,-0.8 9.0,4.0 0.0,9.2" fill="url(#gGreenCube)"/><path d="M0.0,-0.8 L-9.0,-5.4 M0.0,-0.8 L9.0,-5.4 M0.0,-0.8 L0.0,9.2 M0.0,-9.0 L9.0,-5.4 L9.0,4.0 L0.0,9.2 L-9.0,4.0 L-9.0,-5.4 Z" fill="none" stroke="#000" stroke-width="1.150" stroke-linejoin="round"/></g>
<g transform="translate(244.0,125.5)"><path d="M0.0,-0.8 L0.0,-9.0 M0.0,-0.8 L-9.0,4.0 M0.0,-0.8 L9.0,4.0 " fill="none" stroke="#000" stroke-width="1.150"/><polygon points="-9.0,-5.4 0.0,-9.0 0.0,-0.8 -9.0,4.0" fill="url(#gGreenCube)"/><path d="M0.0,-0.8 L-9.0,-5.4 M0.0,-0.8 L9.0,-5.4 M0.0,-0.8 L0.0,9.2 M0.0,-9.0 L9.0,-5.4 L9.0,4.0 L0.0,9.2 L-9.0,4.0 L-9.0,-5.4 Z" fill="none" stroke="#000" stroke-width="1.150" stroke-linejoin="round"/></g>
<g transform="translate(272.0,125.5)"><path d="M0.0,-0.8 L0.0,-9.0 M0.0,-0.8 L-9.0,4.0 M0.0,-0.8 L9.0,4.0 " fill="none" stroke="#000" stroke-width="1.150"/><polygon points="0.0,-0.8 9.0,-5.4 9.0,4.0 0.0,9.2" fill="url(#gGreenCube)"/><path d="M0.0,-0.8 L-9.0,-5.4 M0.0,-0.8 L9.0,-5.4 M0.0,-0.8 L0.0,9.2 M0.0,-9.0 L9.0,-5.4 L9.0,4.0 L0.0,9.2 L-9.0,4.0 L-9.0,-5.4 Z" fill="none" stroke="#000" stroke-width="1.150" stroke-linejoin="round"/></g>
<g transform="translate(300.0,125.5)"><path d="M0.0,-0.8 L0.0,-9.0 M0.0,-0.8 L-9.0,4.0 M0.0,-0.8 L9.0,4.0 " fill="none" stroke="#000" stroke-width="1.150"/><polygon points="-9.0,-5.4 0.0,-0.8 0.0,9.2 -9.0,4.0" fill="url(#gGreenCube)"/><path d="M0.0,-0.8 L-9.0,-5.4 M0.0,-0.8 L9.0,-5.4 M0.0,-0.8 L0.0,9.2 M0.0,-9.0 L9.0,-5.4 L9.0,4.0 L0.0,9.2 L-9.0,4.0 L-9.0,-5.4 Z" fill="none" stroke="#000" stroke-width="1.150" stroke-linejoin="round"/></g>
<g transform="translate(328.0,125.5)"><path d="M0.0,-0.8 L0.0,-9.0 M0.0,-0.8 L-9.0,4.0 M0.0,-0.8 L9.0,4.0 " fill="none" stroke="#000" stroke-width="1.150"/><polygon points="0.0,-9.0 9.0,-5.4 9.0,4.0 0.0,-0.8" fill="url(#gGreenCube)"/><path d="M0.0,-0.8 L-9.0,-5.4 M0.0,-0.8 L9.0,-5.4 M0.0,-0.8 L0.0,9.2 M0.0,-9.0 L9.0,-5.4 L9.0,4.0 L0.0,9.2 L-9.0,4.0 L-9.0,-5.4 Z" fill="none" stroke="#000" stroke-width="1.150" stroke-linejoin="round"/></g>
<g transform="translate(356.0,125.5)"><polygon points="0.0,-9.0 9.0,-5.4 0.0,-0.8 -9.0,-5.4" fill="#5af03c" stroke="#1a8a0a" stroke-width="0.600"/><polygon points="-9.0,-5.4 0.0,-0.8 0.0,9.2 -9.0,4.0" fill="#38d020" stroke="#1a8a0a" stroke-width="0.600"/><polygon points="0.0,-0.8 9.0,-5.4 9.0,4.0 0.0,9.2" fill="#1fa80c" stroke="#1a8a0a" stroke-width="0.600"/></g>
<g transform="translate(76.0,153.0)"><path d="M-5.2,-6.3 L-5.2,6.3 A5.2,2 0 0 0 5.2,6.3 L5.2,-6.3 A5.2,2 0 0 0 -5.2,-6.3 Z" fill="none" stroke="#222" stroke-width="1"/><ellipse cx="0" cy="-6.3" rx="5.2" ry="2" fill="none" stroke="#222" stroke-width="1"/><path d="M-5.500,6.500 A5.500,2 0 0 1 5.500,6.500" fill="none" stroke="#222" stroke-width="0.700"/></g>
<g transform="translate(76.0,181.0)"><path d="M-5.2,-6.3 L-5.2,6.3 A5.2,2 0 0 0 5.2,6.3 L5.2,-6.3 A5.2,2 0 0 0 -5.2,-6.3 Z" fill="none" stroke="#222" stroke-width="1"/><ellipse cx="0" cy="-6.3" rx="5.2" ry="2" fill="none" stroke="#222" stroke-width="1"/></g>
<g transform="translate(76.0,209.0)"><ellipse cx="3" cy="7.9" rx="7" ry="1.6" fill="#555" opacity="0.45"/><path d="M-5.2,-6.3 L-5.2,6.3 A5.2,2 0 0 0 5.2,6.3 L5.2,-6.3 A5.2,2 0 0 0 -5.2,-6.3 Z" fill="url(#gCylB)" stroke="#101830" stroke-width="1"/><ellipse cx="0" cy="-6.3" rx="5.2" ry="2" fill="#7aa0e0" stroke="#101830" stroke-width="1"/></g>
<g transform="translate(76.0,237.0)"><ellipse cx="3" cy="7.9" rx="7" ry="1.6" fill="#555" opacity="0.45"/><path d="M-5.2,-6.3 L-5.2,6.3 A5.2,2 0 0 0 5.2,6.3 L5.2,-6.3 A5.2,2 0 0 0 -5.2,-6.3 Z" fill="url(#gCylL)" stroke="#48506a" stroke-width="1"/><ellipse cx="0" cy="-6.3" rx="5.2" ry="2" fill="#eef4ff" stroke="#48506a" stroke-width="1"/></g>
<g transform="translate(76.0,265.0)"><path d="M-5.2,-6.3 L-5.2,6.3 A5.2,2 0 0 0 5.2,6.3 L5.2,-6.3 A5.2,2 0 0 0 -5.2,-6.3 Z" fill="none" stroke="#222" stroke-width="1"/><ellipse cx="0" cy="-6.3" rx="5.2" ry="2" fill="none" stroke="#222" stroke-width="1"/><path d="M-3,-6 L-1,7.500 L1.500,-6 L3.500,7.500 M-4,7 L-1.500,-6 M4,-6 L1.500,8" fill="none" stroke="#222" stroke-width="0.700"/></g>
<g>
<polygon points="121,920.9 138.8,910.9 138.8,949.5 121,940" fill="#8ea0c0" opacity="0.45"/>
<path d="M121,920.9 L138.8,910.9 L138.8,950 M121,922.3 L138.8,931.9" fill="none" stroke="#d8d8d8" stroke-width="0.9"/>
<polygon points="120.5,941.5 138.8,931.9 155.6,941.7 139.9,950.8" fill="#8a9a4a" opacity="0.75"/>
<path d="M138.8,931.9 L155.6,941.7 L139.9,950.8" fill="none" stroke="#f0f000" stroke-width="1"/>
<path d="M119.6,941 V890" stroke="#00a0a8" stroke-width="2"/><path d="M119.6,880.8 l-4,9.800 a4,1.500 0 0 0 8,0 Z" fill="#00d0e0"/>
<path d="M120,941.500 L147,926.200" stroke="#00b400" stroke-width="2"/><path d="M155.800,921.300 l-10.800,1.200 l4,7.400 Z" fill="#00c000"/>
<path d="M120,942.500 L137,952" stroke="#e00000" stroke-width="2.400"/><path d="M144.800,956.300 l-10.500,-0.600 l4,-7 Z" fill="#e00000"/>
<circle cx="119.400" cy="941.900" r="3.600" fill="#777"/><circle cx="118.600" cy="941" r="1.600" fill="#aaa"/>
<text x="115.800" y="879" font-size="11" font-family="Liberation Sans,sans-serif" fill="#d0d0d0">Z</text>
<text x="155.500" y="922.500" font-size="10.500" font-family="Liberation Sans,sans-serif" fill="#e81010">Y</text>
<text x="145" y="964" font-size="11" font-family="Liberation Sans,sans-serif" fill="#d0d0d0">X</text>
</g>
<g fill="url(#wm)" opacity="0.95">
<path d="M891,511.500 h2 v26.500 h12.500 v2 h-14.500 Z M895,508.500 h2 v27 h-2 Z M899,512 h1.800 v21.500 q4,1.500 6.500,4.500 h-2.600 q-2.500,-2.500 -5.700,-3 Z"/>
<path d="M936,511.500 h-2 v26.500 h-12.500 v2 h14.500 Z M932,508.500 h-2 v27 h2 Z M928,512 h-1.800 v21.500 q-4,1.500 -6.500,4.500 h2.600 q2.500,-2.500 5.700,-3 Z"/>
<path d="M913,511 q-9,3 -9.500,11.500 q0,8 7.500,11 q-3.500,-5.500 -0.500,-11 q1.500,4.500 4.500,5.500 q-1.500,-7 2.500,-9.500 q-0.500,5 2.500,7.500 q1.500,3.500 -2.500,7.500 q6.500,-2.500 6.500,-10 q-0.500,-8.500 -11,-12.500 Z"/><rect x="909.500" y="537.500" width="8" height="2.500"/>
<text x="947.500" y="528.600" font-size="16.300" font-weight="bold" font-family="Liberation Sans,Noto Sans CJK SC,sans-serif" textLength="81.500" lengthAdjust="spacingAndGlyphs">智造资料网</text>
<text x="947.500" y="537.800" font-size="4.600" font-weight="bold" font-style="italic" font-family="Liberation Sans,sans-serif" textLength="81.500" lengthAdjust="spacingAndGlyphs">INTELLIGENT MANUFACTURING DATA</text>
</g>
<rect x="1340.500" y="1003.500" width="132" height="15" fill="#fff"/>
<circle cx="1468.500" cy="1009" r="3.600" fill="#e8f2ff" stroke="#3a78c8" stroke-width="1.400"/><path d="M1466,1012 l-4,4.500" stroke="#2a58a8" stroke-width="1.600"/>
<path d="M1335.0,1003 V1018 M1337.0,1004 V1018" stroke="#a8b0c0" stroke-width="1" stroke-dasharray="1,2"/><path d="M1476.0,1003 V1018 M1478.0,1004 V1018" stroke="#a8b0c0" stroke-width="1" stroke-dasharray="1,2"/><path d="M1657.0,1003 V1018 M1659.0,1004 V1018" stroke="#a8b0c0" stroke-width="1" stroke-dasharray="1,2"/>
<path d="M1592.5,1003 V1018" stroke="#9aa2b4" stroke-width="1"/>
<path d="M1726.5,1003 V1018" stroke="#9aa2b4" stroke-width="1"/>
<path d="M1757.5,1003 V1018" stroke="#9aa2b4" stroke-width="1"/>
<path d="M1800.5,1003 V1018" stroke="#9aa2b4" stroke-width="1"/>
<path d="M1843.5,1003 V1018" stroke="#9aa2b4" stroke-width="1"/>
<path d="M1886.5,1003 V1018" stroke="#9aa2b4" stroke-width="1"/>
<rect x="1762" y="1005" width="32" height="12" fill="#46628d"/>
<rect x="1805" y="1005" width="32" height="12" fill="#46628d"/>
<rect x="1848" y="1005" width="32" height="12" fill="#46628d"/>
<circle cx="1900.300" cy="1009.500" r="6.300" fill="#1838c8" stroke="#102070" stroke-width="0.600"/><path d="M1896.500,1005.500 q3,-2.500 5.500,-1 q1,2.500 -1.500,4 q-1,2.500 -3,3.500 q-2.500,-2.500 -1,-6.500 Z M1902.500,1010 q2,-0.500 3.200,1 q-1,3 -3.200,3.500 q-1,-2.200 0,-4.500 Z" fill="#28c028"/><ellipse cx="1898.300" cy="1006.500" rx="2" ry="1.200" fill="#fff" opacity="0.500"/>
<path d="M2,1020.500 H1908" stroke="#a0a0a0" stroke-width="1"/>
<path d="M1133.0,1023 V1038" stroke="#9aa2b4" stroke-width="1"/>
<path d="M1175.5,1023 V1038" stroke="#9aa2b4" stroke-width="1"/>
<path d="M1206.5,1023 V1038" stroke="#9aa2b4" stroke-width="1"/>
<path d="M1237.5,1023 V1038" stroke="#9aa2b4" stroke-width="1"/>
<path d="M1268.5,1023 V1038" stroke="#9aa2b4" stroke-width="1"/>
<path d="M1299.5,1023 V1038" stroke="#9aa2b4" stroke-width="1"/>
<path d="M1330.5,1023 V1038" stroke="#9aa2b4" stroke-width="1"/>
<path d="M1361.5,1023 V1038" stroke="#9aa2b4" stroke-width="1"/>
<path d="M1423.5,1023 V1038" stroke="#9aa2b4" stroke-width="1"/>
<path d="M1454.5,1023 V1038" stroke="#9aa2b4" stroke-width="1"/>
<path d="M1580.5,1023 V1038" stroke="#9aa2b4" stroke-width="1"/>
<path d="M1654.5,1023 V1038" stroke="#9aa2b4" stroke-width="1"/>
<rect x="1182.500" y="1023" width="16" height="15.500" fill="#a8acc0" stroke="#7a7e90" stroke-width="1"/><g transform="translate(1190.5,1030.5)"><g transform="scale(0.68)"><path d="M-8,-1 A8,7 0 0 1 5,-6.2 L6.5,-8.5 L8.5,-1.5 L1.5,-2.2 L3.2,-4 A5,4.5 0 0 0 -4.4,-1 Z" fill="#e86070" stroke="#b03040" stroke-width="0.6"/><path d="M8,1 A8,7 0 0 1 -5,6.2 L-6.5,8.5 L-8.5,1.5 L-1.5,2.2 L-3.2,4 A5,4.5 0 0 0 4.4,1 Z" fill="#e86070" stroke="#b03040" stroke-width="0.6"/></g></g>
<rect x="1213" y="1022.500" width="16.500" height="16.500" fill="#ffe480"/><g transform="translate(1221.0,1030.5)"><path d="M-6,-6 l4,2 l3,-4 l0.500,4.500 l4.500,1 l-4,2.500 l0.500,4 l-3.500,-2.500 l-4.500,2 l1.500,-4.500 Z" fill="#c060d0" stroke="#f0a030" stroke-width="0.500"/><path d="M-1,-1 l7.500,3.500 l-3,0.800 l3,4 l-1.600,1.200 l-3,-4 l-2,2.400 Z" fill="#e8e8e8" stroke="#666" stroke-width="0.600"/></g>
<g transform="translate(1253.0,1030.5)"><rect x="-6" y="-1" width="11" height="8" fill="#dce8fc" stroke="#4a6aa8" stroke-width="0.800"/><path d="M-3,0 v6 M0,0 v6 M-5,3 h9" stroke="#3060c0" stroke-width="0.700"/><path d="M-6,-2 l5,-5.500 l8,1.500 l-2,4 Z" fill="#e8b070" stroke="#a07030" stroke-width="0.600"/><path d="M-3,-4 l4,3 M0,-6 l4,3" stroke="#804010" stroke-width="0.600"/></g>
<g transform="translate(1284.0,1030.5)"><text x="0" y="5.500" font-size="18" font-weight="bold" text-anchor="middle" font-family="Liberation Sans,sans-serif" fill="#4a80d0" stroke="#2a5098" stroke-width="0.300">?</text><ellipse cx="0.500" cy="7.500" rx="5.500" ry="1" fill="#777" opacity="0.450"/></g>
<g transform="translate(1311.0,1027.0)"><polygon points="0,-4.0 3.5,-2.0 0,0 -3.5,-2.0" fill="#7ab0f0" stroke="#1a3880" stroke-width="0.5"/><polygon points="-3.5,-2.0 0,0 0,4.0 -3.5,2.0" fill="#4a80d8" stroke="#1a3880" stroke-width="0.5"/><polygon points="3.5,-2.0 0,0 0,4.0 3.5,2.0" fill="#2a58b0" stroke="#1a3880" stroke-width="0.5"/></g><g transform="translate(1318.5,1033.0)"><polygon points="0,-4.2 3.6,-2.1 0,0 -3.6,-2.1" fill="#8ab8c0" stroke="#223" stroke-width="0.5"/><polygon points="-3.6,-2.1 0,0 0,4.2 -3.6,2.1" fill="#5a8890" stroke="#223" stroke-width="0.5"/><polygon points="3.6,-2.1 0,0 0,4.2 3.6,2.1" fill="#3a5860" stroke="#223" stroke-width="0.5"/></g><path d="M1304,1032 h6 M1306,1029 l4,3 l-4,3 M1305,1030.500 l2.500,1.500 l-2.500,1.500" fill="none" stroke="#e81818" stroke-width="1.200"/>
<rect x="1337" y="1022.500" width="17" height="16.500" fill="#ffe480"/><g transform="translate(1345.5,1031.0)"><polygon points="0,-7.500 7.500,-4.500 0,-1.500 -7.500,-4.500" fill="#e040f0" stroke="#8020a0" stroke-width="0.500"/><polygon points="-7.500,-4.500 0,-1.500 0,7 -7.500,3.500" fill="#7ab0b0" stroke="#2050c0" stroke-width="1"/><polygon points="7.500,-4.500 0,-1.500 0,7 7.500,3.500" fill="#5a9090" stroke="#2050c0" stroke-width="1"/></g>
<rect x="1432" y="1022.500" width="13" height="15" fill="#e8ecf8" stroke="#5a6288" stroke-width="1"/><path d="M1438.500,1022.500 v15 M1432,1030 h13" stroke="#5a6288" stroke-width="1"/>
<rect x="1371.500" y="1028" width="9" height="9.500" fill="#e8ecf0" stroke="#5a7a6a" stroke-width="1"/>
<g stroke-linejoin="round">
<ellipse cx="1405.800" cy="1037.700" rx="15" ry="2.600" fill="#b87848"/>
<path d="M1405,978 q-0.500,-6 -2.500,-9 q-1,-4.500 -4,-3.500 q-1.500,2 1,4.500 q2.500,1 3.500,3.500 q0.800,2 0.800,4.500 Z M1407.500,978 q0.300,-5 1.800,-8.500 q1,-2.500 2.500,-1.500 q1,2 -0.500,4 q-1.500,1 -1.800,6 Z" fill="#8a4a18"/>
<circle cx="1389.5" cy="977.800" r="5.600" fill="#c08a4a" stroke="#9a5a20" stroke-width="0.800"/><circle cx="1389.5" cy="978.300" r="2.600" fill="#f4c0a8"/>
<circle cx="1423.4" cy="977.800" r="5.600" fill="#c08a4a" stroke="#9a5a20" stroke-width="0.800"/><circle cx="1423.4" cy="978.300" r="2.600" fill="#f4c0a8"/>
<ellipse cx="1406.200" cy="998" rx="26.600" ry="24.600" fill="#c08a4a" stroke="#9a5a20" stroke-width="0.900"/>
<ellipse cx="1389.500" cy="1021" rx="4.200" ry="3" fill="#fff25e" stroke="#c8a030" stroke-width="0.600" transform="rotate(-25 1389.500 1021)"/>
<ellipse cx="1422.500" cy="1020.500" rx="4.200" ry="3" fill="#fff25e" stroke="#c8a030" stroke-width="0.600" transform="rotate(25 1422.500 1020.500)"/>
<ellipse cx="1399.600" cy="1035.500" rx="3" ry="2.600" fill="#fff25e" stroke="#c8a030" stroke-width="0.600"/><ellipse cx="1414" cy="1035.300" rx="3" ry="2.600" fill="#fff25e" stroke="#c8a030" stroke-width="0.600"/>
<ellipse cx="1407.500" cy="1026" rx="11" ry="10.500" fill="#fff25e" stroke="#c8a030" stroke-width="0.600"/>
<ellipse cx="1406" cy="1018.600" rx="12.500" ry="3.200" fill="#c08a4a" stroke="#9a5a20" stroke-width="0.700"/>
<ellipse cx="1406.200" cy="1000.600" rx="20.200" ry="16.800" fill="#fff25e" stroke="#a86820" stroke-width="0.900"/>
<circle cx="1395.500" cy="993.800" r="1.350" fill="#6a3010"/><circle cx="1417" cy="993.500" r="1.350" fill="#6a3010"/><ellipse cx="1406.300" cy="997.600" rx="1.300" ry="0.700" fill="#a05820"/>
<ellipse cx="1390.800" cy="999.700" rx="3.400" ry="2.300" fill="#f8a830"/><ellipse cx="1421.300" cy="999.300" rx="3.400" ry="2.300" fill="#f8a830"/>
<path d="M1399,1024 L1417,1019.500" stroke="#9a5a20" stroke-width="1.300"/>
<circle cx="1392.400" cy="1024" r="2" fill="#c08a4a" stroke="#9a5a20" stroke-width="0.500"/><circle cx="1401.600" cy="1024" r="2" fill="#c08a4a" stroke="#9a5a20" stroke-width="0.500"/>
<ellipse cx="1396.800" cy="1029" rx="7" ry="6.200" fill="#c08a4a" stroke="#9a5a20" stroke-width="0.700"/>
<ellipse cx="1392.800" cy="1030" rx="1.500" ry="1" fill="#ff70c8"/><ellipse cx="1400" cy="1030.800" rx="1.500" ry="1" fill="#ff70c8"/><circle cx="1394.500" cy="1027.500" r="0.600" fill="#5a2a0a"/><circle cx="1399.500" cy="1028" r="0.600" fill="#5a2a0a"/>
<text x="0" y="8.500" font-size="25" font-family="Liberation Sans,sans-serif" font-weight="bold" text-anchor="middle" fill="#fff" stroke="#a86830" stroke-width="4.200" transform="translate(1445.800,981) rotate(6) scale(0.820,0.920)" style="paint-order:stroke">W</text>
<circle cx="1439.500" cy="978" r="1.200" fill="#d8a868"/><circle cx="1448" cy="983" r="1.200" fill="#d8a868"/><circle cx="1452" cy="976" r="1.100" fill="#d8a868"/><circle cx="1443.500" cy="986" r="1" fill="#d8a868"/>
<circle cx="1439.700" cy="993.400" r="3.500" fill="#c8935a" stroke="#9a5a20" stroke-width="0.600"/><circle cx="1453.300" cy="993.400" r="3.500" fill="#c8935a" stroke="#9a5a20" stroke-width="0.600"/><circle cx="1439.900" cy="993.600" r="1.500" fill="#f0c0a0"/><circle cx="1453.100" cy="993.600" r="1.500" fill="#f0c0a0"/>
<ellipse cx="1446.100" cy="1001.800" rx="4.200" ry="5" fill="#fff"/>
<text x="0" y="8.100" font-size="23" font-family="Liberation Sans,sans-serif" font-weight="bold" text-anchor="middle" fill="#c8935a" stroke="#9a5a20" stroke-width="3.800" transform="translate(1446.200,1002) scale(0.900,1)" style="paint-order:stroke">O</text>
<text x="0" y="8.100" font-size="23" font-family="Liberation Sans,sans-serif" font-weight="bold" text-anchor="middle" fill="#c8935a" stroke="#c8935a" stroke-width="2.600" transform="translate(1446.200,1002) scale(0.900,1)">O</text>
<text x="0" y="9.300" font-size="26" font-family="Liberation Sans,sans-serif" font-weight="bold" text-anchor="middle" fill="#fff25e" stroke="#c8a030" stroke-width="4.200" transform="translate(1446.800,1022.300) rotate(-8) scale(0.800,0.920)" style="paint-order:stroke">W</text>
<text x="0" y="8.500" font-size="25" font-family="Liberation Sans,sans-serif" font-weight="bold" text-anchor="middle" fill="#fff" stroke="#fff" stroke-width="2.600" transform="translate(1445.800,981) rotate(6) scale(0.820,0.920)">W</text>
<circle cx="1439.500" cy="978" r="1.300" fill="#d8a868"/><circle cx="1448" cy="984" r="1.300" fill="#d8a868"/><circle cx="1452.500" cy="977" r="1.200" fill="#d8a868"/><circle cx="1443" cy="986.500" r="1.100" fill="#d8a868"/>
<text x="0" y="9.300" font-size="26" font-family="Liberation Sans,sans-serif" font-weight="bold" text-anchor="middle" fill="#fff25e" stroke="#fff25e" stroke-width="2.600" transform="translate(1446.800,1022.300) rotate(-8) scale(0.800,0.920)">W</text>
<circle cx="1367.600" cy="1005.700" r="8.600" fill="#94665a"/><text x="1367.600" y="1010.200" font-size="12.500" font-family="Liberation Sans,sans-serif" text-anchor="middle" fill="#fff">A</text>
<circle cx="1374.600" cy="1026.300" r="8.600" fill="#94665a"/><path d="M1371.500,1021.500 l-3.200,2.200 l1.500,2.300 l1.400,-0.800 v6 h6.800 v-6 l1.400,0.800 l1.500,-2.300 l-3.200,-2.200 q-1.600,1.400 -3.100,1.400 q-1.500,0 -3.100,-1.400 Z" fill="#fff"/>
</g>
</svg>
</body></html>
